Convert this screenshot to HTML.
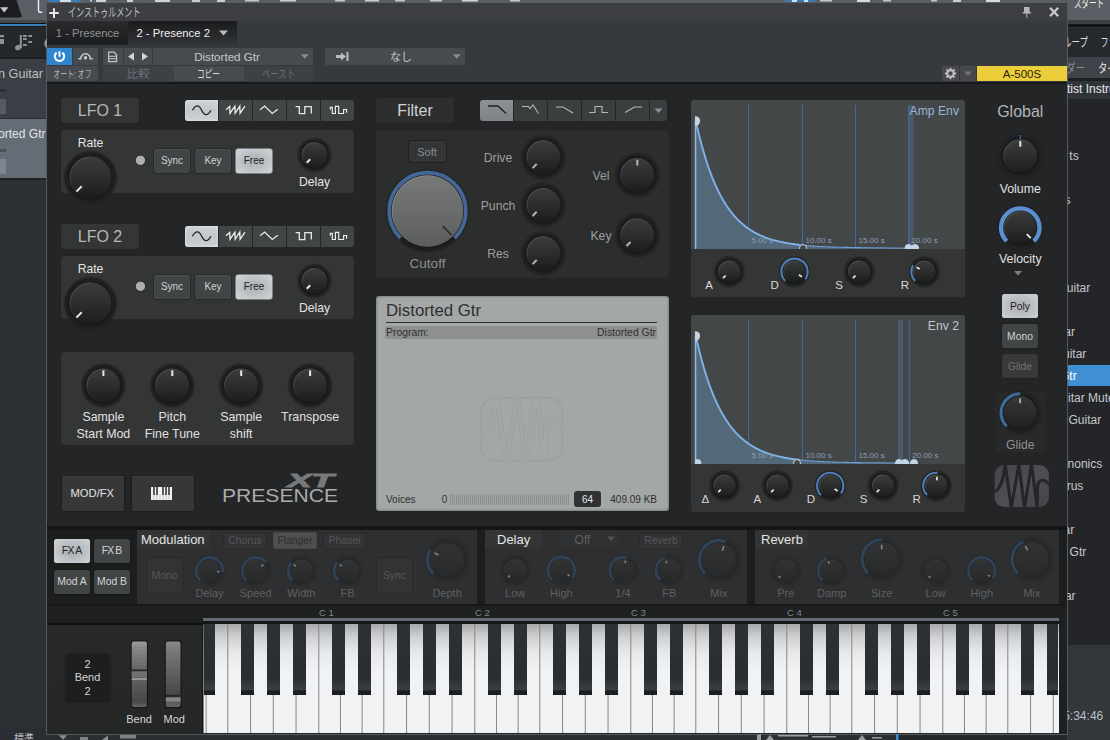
<!DOCTYPE html>
<html lang="ja"><head><meta charset="utf-8"><title>Presence XT</title>
<style>
html,body{margin:0;padding:0;background:#2f3237;}
body{width:1110px;height:740px;position:relative;overflow:hidden;font-family:"Liberation Sans","Noto Sans CJK JP",sans-serif;}
#root div{position:absolute;box-sizing:border-box;}
svg{position:absolute;left:0;top:0;}
svg text{font-family:"Liberation Sans","Noto Sans CJK JP",sans-serif;white-space:pre;}
</style></head><body>
<div id="root">
<div class="" style="left:0px;top:0px;width:1110px;height:740px;background:#2f3237;"></div>
<div class="" style="left:0px;top:0px;width:1110px;height:20px;background:#5a5f66;"></div>
<div class="" style="left:0px;top:20px;width:47px;height:3px;background:#45494e;"></div>
<div class="" style="left:0px;top:23px;width:47px;height:1.3px;background:#111214;"></div>
<div class="" style="left:0px;top:24.3px;width:47px;height:2px;background:#3a7fb8;"></div>
<div class="" style="left:0px;top:26.3px;width:47px;height:1px;background:#16181a;"></div>
<div class="" style="left:0px;top:27px;width:47px;height:30px;background:#24282b;"></div>
<div class="" style="left:0px;top:57px;width:47px;height:2px;background:#1c1e21;"></div>
<div class="" style="left:0px;top:59px;width:47px;height:59px;background:#3a3f45;"></div>
<div class="" style="left:0px;top:118px;width:47px;height:1px;background:#2c3035;"></div>
<div class="" style="left:0px;top:119px;width:47px;height:59px;background:#646c75;"></div>
<div class="" style="left:0px;top:178px;width:47px;height:1.5px;background:#1f2124;"></div>
<div class="" style="left:0px;top:179.5px;width:47px;height:555px;background:#2d3035;"></div>
<div class="" style="left:0px;top:734px;width:1110px;height:6px;background:#2b2e33;"></div>
<div class="" style="left:0px;top:728px;width:47px;height:12px;background:#2a2d31;"></div>
<div class="" style="left:899px;top:734.5px;width:168px;height:6px;background:#24272b;"></div>
<div class="" style="left:0px;top:89px;width:6px;height:3px;background:#2d3136;"></div>
<div class="" style="left:0px;top:99px;width:6px;height:15px;background:#555b61;"></div>
<div class="" style="left:0px;top:149px;width:6px;height:3px;background:#4a5057;"></div>
<div class="" style="left:0px;top:159px;width:6px;height:15px;background:#7d858e;"></div>
<div class="" style="left:1067px;top:20px;width:43px;height:3.8px;background:#3a3d42;"></div>
<div class="" style="left:1067px;top:23.8px;width:43px;height:3.7px;background:#131416;"></div>
<div class="" style="left:1067px;top:27.5px;width:43px;height:29.7px;background:#25282c;"></div>
<div class="" style="left:1067px;top:57.2px;width:43px;height:20.8px;background:#3f434a;"></div>
<div class="" style="left:1067px;top:78px;width:43px;height:3px;background:#1d1f22;"></div>
<div class="" style="left:1067px;top:81px;width:43px;height:18px;background:#30343a;"></div>
<div class="" style="left:1067px;top:99px;width:43px;height:546px;background:#232528;"></div>
<div class="" style="left:1067px;top:365px;width:43px;height:21px;background:#3f90d2;"></div>
<div class="" style="left:1067px;top:645px;width:43px;height:95px;background:#33363b;"></div>
<div class="" style="left:46px;top:3px;width:1021.5px;height:731.5px;background:#232527;box-shadow:inset 0 0 0 1px #555a60;"></div>
<div class="" style="left:47px;top:3px;width:1020px;height:18px;background:#3d3e41;"></div>
<div class="" style="left:47px;top:21px;width:1020px;height:61px;background:#36393d;"></div>
<div class="" style="left:47px;top:82px;width:1020px;height:2px;background:#17181a;"></div>
<div class="" style="left:47px;top:21px;width:81px;height:24px;background:linear-gradient(#2a2b2d,#1b1c1d);"></div>
<div class="" style="left:128px;top:21px;width:109px;height:26px;background:linear-gradient(#1a1b1c,#2c2e31 70%,#36393d);"></div>
<div class="" style="left:47px;top:48px;width:25px;height:17px;background:#2e86cf;"></div>
<div class="" style="left:73px;top:48px;width:25px;height:17px;background:#474b50;"></div>
<div class="" style="left:103px;top:48px;width:20px;height:17px;background:#474b50;"></div>
<div class="" style="left:124px;top:48px;width:28px;height:17px;background:#474b50;"></div>
<div class="" style="left:153px;top:48px;width:160px;height:17px;background:#474b50;"></div>
<div class="" style="left:325px;top:48px;width:140px;height:17px;background:#474b50;"></div>
<div class="" style="left:47px;top:66px;width:51px;height:15px;background:#474b50;"></div>
<div class="" style="left:103px;top:66px;width:71px;height:15px;background:#3d4145;"></div>
<div class="" style="left:174px;top:66px;width:70px;height:15px;background:#474b50;"></div>
<div class="" style="left:244px;top:66px;width:69px;height:15px;background:#3d4145;"></div>
<div class="" style="left:942px;top:66px;width:17px;height:15px;background:#47494d;"></div>
<div class="" style="left:960px;top:66px;width:16px;height:15px;background:#47494d;"></div>
<div class="" style="left:977px;top:66px;width:90px;height:15px;background:#ecce3a;"></div>
<div class="" style="left:61px;top:98px;width:78px;height:25px;background:#343535;border-radius:3px;"></div>
<div class="" style="left:185px;top:100px;width:33px;height:21px;background:linear-gradient(#cfd3d6,#c3c7ca 50%,#cdd0d3);border-radius:3px 0 0 3px;box-shadow:inset 0 0 3px rgba(255,255,255,.6);"></div>
<div class="" style="left:219px;top:100px;width:33px;height:21px;background:#414546;border-radius:0;"></div>
<div class="" style="left:253px;top:100px;width:33px;height:21px;background:#414546;border-radius:0;"></div>
<div class="" style="left:287px;top:100px;width:33px;height:21px;background:#414546;border-radius:0;"></div>
<div class="" style="left:321px;top:100px;width:33px;height:21px;background:#414546;border-radius:0 3px 3px 0;"></div>
<div class="" style="left:61px;top:130px;width:293px;height:63px;background:#343535;border-radius:4px;"></div>
<div class="" style="left:154px;top:149px;width:36px;height:24px;background:#414546;border-radius:2px;box-shadow:0 0 0 1px #27282a, inset 0 1px 0 rgba(255,255,255,0.06);"></div>
<div class="" style="left:195px;top:149px;width:36px;height:24px;background:#414546;border-radius:2px;box-shadow:0 0 0 1px #27282a, inset 0 1px 0 rgba(255,255,255,0.06);"></div>
<div class="" style="left:236px;top:149px;width:36px;height:24px;background:radial-gradient(ellipse at center,#b4b8bd 25%,#d2d5d8 100%);border-radius:2px;box-shadow:0 0 0 0.5px #c8cacc;"></div>
<div class="" style="left:61px;top:224px;width:78px;height:25px;background:#343535;border-radius:3px;"></div>
<div class="" style="left:185px;top:226px;width:33px;height:21px;background:linear-gradient(#cfd3d6,#c3c7ca 50%,#cdd0d3);border-radius:3px 0 0 3px;box-shadow:inset 0 0 3px rgba(255,255,255,.6);"></div>
<div class="" style="left:219px;top:226px;width:33px;height:21px;background:#414546;border-radius:0;"></div>
<div class="" style="left:253px;top:226px;width:33px;height:21px;background:#414546;border-radius:0;"></div>
<div class="" style="left:287px;top:226px;width:33px;height:21px;background:#414546;border-radius:0;"></div>
<div class="" style="left:321px;top:226px;width:33px;height:21px;background:#414546;border-radius:0 3px 3px 0;"></div>
<div class="" style="left:61px;top:256px;width:293px;height:63px;background:#343535;border-radius:4px;"></div>
<div class="" style="left:154px;top:275px;width:36px;height:24px;background:#414546;border-radius:2px;box-shadow:0 0 0 1px #27282a, inset 0 1px 0 rgba(255,255,255,0.06);"></div>
<div class="" style="left:195px;top:275px;width:36px;height:24px;background:#414546;border-radius:2px;box-shadow:0 0 0 1px #27282a, inset 0 1px 0 rgba(255,255,255,0.06);"></div>
<div class="" style="left:236px;top:275px;width:36px;height:24px;background:radial-gradient(ellipse at center,#b4b8bd 25%,#d2d5d8 100%);border-radius:2px;box-shadow:0 0 0 0.5px #c8cacc;"></div>
<div class="" style="left:61px;top:352px;width:293px;height:93px;background:#343535;border-radius:4px;"></div>
<div class="" style="left:61px;top:475px;width:63.5px;height:36.5px;background:#363738;border-radius:2.5px;box-shadow:inset 0 0 0 1px #1c1d1e, inset 0 2px 0 rgba(255,255,255,0.05);"></div>
<div class="" style="left:131px;top:475px;width:63.5px;height:36.5px;background:#363738;border-radius:2.5px;box-shadow:inset 0 0 0 1px #1c1d1e, inset 0 2px 0 rgba(255,255,255,0.05);"></div>
<div class="" style="left:376px;top:98px;width:78px;height:25px;background:#2d2e2e;border-radius:3px;"></div>
<div class="" style="left:480px;top:100px;width:33px;height:21px;background:linear-gradient(#8d9196,#7e8287);border-radius:3px 0 0 3px;"></div>
<div class="" style="left:514px;top:100px;width:33px;height:21px;background:#3b3e3f;"></div>
<div class="" style="left:548px;top:100px;width:33px;height:21px;background:#3b3e3f;"></div>
<div class="" style="left:582px;top:100px;width:33px;height:21px;background:#3b3e3f;"></div>
<div class="" style="left:616px;top:100px;width:33px;height:21px;background:#3b3e3f;"></div>
<div class="" style="left:650px;top:100px;width:17px;height:21px;background:#3b3e3f;border-radius:0 3px 3px 0;"></div>
<div class="" style="left:376px;top:130px;width:293px;height:148px;background:#2c2d2d;border-radius:4px;"></div>
<div class="" style="left:408.5px;top:141px;width:37.5px;height:21px;background:#333536;border-radius:2.5px;box-shadow:0 0 0 1px #1f2021;"></div>
<div class="" style="left:376px;top:296px;width:293px;height:215px;background:#a3a7a6;border-radius:3px;box-shadow:inset 0 0 3px rgba(0,0,0,.45);"></div>
<div class="" style="left:386px;top:322px;width:271px;height:1px;background:#2e3031;"></div>
<div class="" style="left:385px;top:326px;width:272px;height:13px;background:#8e908f;border-radius:2px;"></div>
<div class="" style="left:574px;top:491px;width:27px;height:16px;background:#303233;border-radius:3px;"></div>
<div class="" style="left:691px;top:100px;width:274px;height:197px;background:#343535;border-radius:3px;"></div>
<div class="" style="left:691px;top:100px;width:274px;height:149px;background:#434748;border-radius:3px 3px 0 0;"></div>
<div class="" style="left:691px;top:315px;width:274px;height:197px;background:#343535;border-radius:3px;"></div>
<div class="" style="left:691px;top:315px;width:274px;height:149px;background:#434748;border-radius:3px 3px 0 0;"></div>
<div class="" style="left:1002px;top:294px;width:36px;height:24px;background:radial-gradient(ellipse at center,#b2b6bc 25%,#cfd2d6 100%);border-radius:2.5px;"></div>
<div class="" style="left:1002px;top:324px;width:36px;height:24px;background:#414546;border-radius:2.5px;box-shadow:0 0 0 0.5px #1c1d1e;"></div>
<div class="" style="left:1002px;top:354px;width:36px;height:24px;background:#37393a;border-radius:2.5px;box-shadow:0 0 0 0.5px #1c1d1e;"></div>
<div class="" style="left:996px;top:392px;width:49px;height:60px;background:#27292b;"></div>
<div class="" style="left:47px;top:526.3px;width:1020px;height:3.4px;background:#151617;"></div>
<div class="" style="left:47px;top:529.5px;width:1020px;height:74.5px;background:#1c1d1d;"></div>
<div class="" style="left:47px;top:604px;width:1020px;height:2.2px;background:#171818;"></div>
<div class="" style="left:47px;top:606px;width:1020px;height:18px;background:#1f2020;"></div>
<div class="" style="left:54px;top:539px;width:36px;height:23.5px;background:radial-gradient(ellipse at center,#b2b6bc 25%,#d2d5d8 100%);border-radius:2.5px;"></div>
<div class="" style="left:94px;top:539px;width:36px;height:23.5px;background:#414546;border-radius:2.5px;box-shadow:0 0 0 0.5px #151617;"></div>
<div class="" style="left:54px;top:570px;width:36px;height:23.5px;background:#414546;border-radius:2.5px;box-shadow:0 0 0 0.5px #151617;"></div>
<div class="" style="left:94px;top:570px;width:36px;height:23.5px;background:#414546;border-radius:2.5px;box-shadow:0 0 0 0.5px #151617;"></div>
<div class="" style="left:137px;top:530px;width:340px;height:74px;background:#2e2f30;"></div>
<div class="" style="left:137px;top:530px;width:73px;height:18px;background:#333435;"></div>
<div class="" style="left:223px;top:532px;width:44px;height:17px;background:#323334;border-radius:2px;box-shadow:inset 0 0 0 1px #292a2b;"></div>
<div class="" style="left:273px;top:532px;width:44px;height:17px;background:#4e4f50;border-radius:2px;box-shadow:inset 0 0 0 1px #444546;"></div>
<div class="" style="left:323px;top:532px;width:44px;height:17px;background:#323334;border-radius:2px;box-shadow:inset 0 0 0 1px #292a2b;"></div>
<div class="" style="left:146px;top:557px;width:37px;height:37px;background:#323334;border-radius:2px;box-shadow:inset 0 0 0 1px #292a2b;"></div>
<div class="" style="left:376px;top:557px;width:37px;height:37px;background:#323334;border-radius:2px;box-shadow:inset 0 0 0 1px #292a2b;"></div>
<div class="" style="left:485px;top:530px;width:262px;height:74px;background:#2e2f30;"></div>
<div class="" style="left:485px;top:530px;width:57px;height:18px;background:#333435;"></div>
<div class="" style="left:560px;top:531px;width:60px;height:17px;background:#303132;"></div>
<div class="" style="left:639px;top:533px;width:44px;height:16px;background:#323334;border-radius:2px;box-shadow:inset 0 0 0 1px #292a2b;"></div>
<div class="" style="left:755px;top:530px;width:304px;height:74px;background:#2e2f30;"></div>
<div class="" style="left:755px;top:530px;width:52px;height:18px;background:#333435;"></div>
<div class="" style="left:203px;top:618px;width:856px;height:3.2px;background:#666b73;"></div>
<div class="" style="left:203px;top:621.2px;width:856px;height:3px;background:#141516;"></div>
<div class="" style="left:47px;top:624px;width:156px;height:110px;background:linear-gradient(#282929,#252626);"></div>
<div class="" style="left:203px;top:624px;width:856px;height:109px;background:#f1f2f3;"></div>
<div class="" style="left:47px;top:623px;width:156px;height:2px;background:#0e0f10;"></div>
<div class="" style="left:1059px;top:618px;width:8px;height:116px;background:#1f2022;"></div>
<div class="" style="left:64.5px;top:654px;width:45.5px;height:47.5px;background:#1d1e1f;border-radius:4px;box-shadow:0 0 2px #1d1e1f;"></div>
</div>
<svg width="1110" height="740" viewBox="0 0 1110 740">
<defs>
<radialGradient id="halo"><stop offset="0.85" stop-color="#000" stop-opacity="0.35"/><stop offset="1" stop-color="#000" stop-opacity="0"/></radialGradient>
<linearGradient id="kd" x1="0" y1="0" x2="0" y2="1"><stop offset="0" stop-color="#3b3c3c"/><stop offset="0.5" stop-color="#2c2d2d"/><stop offset="1" stop-color="#1b1c1c"/></linearGradient>
<linearGradient id="kdrim" x1="0" y1="0" x2="1" y2="1"><stop offset="0" stop-color="#6a6b6c"/><stop offset="0.5" stop-color="#333" stop-opacity="0.3"/><stop offset="1" stop-color="#111" stop-opacity="0.2"/></linearGradient>
<linearGradient id="kl" x1="0" y1="0" x2="0" y2="1"><stop offset="0" stop-color="#777878"/><stop offset="0.5" stop-color="#6b6c6c"/><stop offset="1" stop-color="#5c5d5d"/></linearGradient>
<linearGradient id="klrim" x1="0" y1="0" x2="1" y2="1"><stop offset="0" stop-color="#a5a6a6"/><stop offset="0.5" stop-color="#777" stop-opacity="0.3"/><stop offset="1" stop-color="#444" stop-opacity="0.4"/></linearGradient>
<linearGradient id="btnA" x1="0" y1="0" x2="0" y2="1"><stop offset="0" stop-color="#d6d9db"/><stop offset="0.5" stop-color="#c2c6c9"/><stop offset="1" stop-color="#d0d3d5"/></linearGradient>
<linearGradient id="wk" x1="0" y1="0" x2="0" y2="1"><stop offset="0" stop-color="#a6a8aa"/><stop offset="0.25" stop-color="#cdced0"/><stop offset="0.6" stop-color="#e8e9ea"/><stop offset="1" stop-color="#f1f2f3"/></linearGradient>
<linearGradient id="bk" x1="0" y1="0" x2="0" y2="1"><stop offset="0" stop-color="#2d3135"/><stop offset="0.75" stop-color="#2a2e32"/><stop offset="0.93" stop-color="#3a3f44"/><stop offset="0.94" stop-color="#1c1e21"/><stop offset="1" stop-color="#1c1e21"/></linearGradient>
<linearGradient id="wheel" x1="0" y1="0" x2="0" y2="1"><stop offset="0" stop-color="#8a8a8a"/><stop offset="0.5" stop-color="#5a5a5a"/><stop offset="1" stop-color="#6e6e6e"/></linearGradient>
<clipPath id="rclip"><rect x="1067.5" y="0" width="43" height="740"/></clipPath><clipPath id="lgclip2"><rect x="994.4" y="464.8" width="54.8" height="42.5" rx="9.8"/></clipPath><clipPath id="clip100"><rect x="695" y="100" width="270" height="149"/></clipPath><clipPath id="clip315"><rect x="695" y="315" width="270" height="149"/></clipPath><clipPath id="lgclip"><rect x="994.7" y="465.1" width="54.2" height="41.9" rx="9.5"/></clipPath><linearGradient id="lgfill" x1="0" y1="0" x2="1" y2="1"><stop offset="0" stop-color="#434548"/><stop offset="0.5" stop-color="#4c4e51"/><stop offset="1" stop-color="#434548"/></linearGradient><linearGradient id="wheelB" x1="0" y1="0" x2="0" y2="1"><stop offset="0" stop-color="#a0a0a0"/><stop offset="0.12" stop-color="#8a8a8a"/><stop offset="0.40" stop-color="#6c6c6c"/><stop offset="0.70" stop-color="#5a5a5a"/><stop offset="0.92" stop-color="#4a4a4a"/><stop offset="1" stop-color="#6a6a6a"/></linearGradient><linearGradient id="wheelM" x1="0" y1="0" x2="0" y2="1"><stop offset="0" stop-color="#8e8e8e"/><stop offset="0.15" stop-color="#7c7c7c"/><stop offset="0.55" stop-color="#5e5e5e"/><stop offset="0.80" stop-color="#4a4a4a"/><stop offset="1" stop-color="#6a6a6a"/></linearGradient></defs>
<text x="-2" y="73.4" font-size="13" fill="#bcbfc2" text-anchor="start" dominant-baseline="central" font-weight="normal" textLength="45" lengthAdjust="spacingAndGlyphs">n Guitar</text>
<text x="-2" y="133" font-size="13" fill="#e2e4e6" text-anchor="start" dominant-baseline="central" font-weight="normal" textLength="47.500" lengthAdjust="spacingAndGlyphs">orted Gtr</text>
<path d="M0,0H16.500L21.500,15.500Q22,17.500 20,17.500H0Z" fill="#1b1d20"/>
<path d="M0,7.200H8.500L4.200,12.600Z" fill="#c8c8c8"/>
<path d="M38.500,0V10.500Q38.500,12.300 40.300,12.300H42.200" fill="none" stroke="#f0f0f0" stroke-width="1.400"/>
<g fill="#8e9194"><rect x="0" y="35" width="4" height="2.200"/><rect x="0" y="39" width="4" height="5"/><rect x="19.800" y="35" width="2" height="13"/><ellipse cx="18.300" cy="47.500" rx="3.300" ry="2.600" transform="rotate(-20 18.300 47.500)"/><rect x="23" y="35" width="3.800" height="2"/><rect x="28.300" y="35" width="3.800" height="2"/><rect x="23" y="38" width="3.800" height="2"/><rect x="28.300" y="41" width="3.800" height="2"/><rect x="23" y="44" width="3.800" height="2"/><rect x="23" y="41" width="3.800" height="2" opacity="0"/></g>
<path d="M47,38.500 a6,6 0 0 0 0,10" fill="#8e9194"/>
<text x="24" y="738.5" font-size="10" fill="#c0c4c8" text-anchor="middle" dominant-baseline="central" font-weight="normal" >標準</text>
<g clip-path="url(#rclip)">
<text x="1074" y="3.7" font-size="12" fill="#f0f0f0" text-anchor="start" dominant-baseline="central" font-weight="normal" textLength="30" lengthAdjust="spacingAndGlyphs">スタート</text>
<text x="1063" y="43" font-size="12" fill="#dcdee0" text-anchor="start" dominant-baseline="central" font-weight="normal" textLength="25" lengthAdjust="spacingAndGlyphs">ループ</text>
<text x="1100.5" y="43" font-size="12" fill="#dcdee0" text-anchor="start" dominant-baseline="central" font-weight="normal" textLength="16" lengthAdjust="spacingAndGlyphs">ファ</text>
<text x="1066" y="68.6" font-size="12" fill="#8a8e94" text-anchor="start" dominant-baseline="central" font-weight="normal" textLength="19" lengthAdjust="spacingAndGlyphs">ダー</text>
<text x="1098.3" y="68.6" font-size="12" fill="#e4e4e4" text-anchor="start" dominant-baseline="central" font-weight="normal" textLength="18" lengthAdjust="spacingAndGlyphs">タイ</text>
<text x="1067" y="89.2" font-size="12" fill="#e8eaec" text-anchor="start" dominant-baseline="central" font-weight="normal" >tist Instru</text>
<text x="1069.3" y="155.5" font-size="12" fill="#c5c8cc" text-anchor="start" dominant-baseline="central" font-weight="normal" >ts</text>
<text x="1064.5" y="199.5" font-size="12" fill="#c5c8cc" text-anchor="start" dominant-baseline="central" font-weight="normal" >s</text>
<text x="1066.8" y="287.5" font-size="12" fill="#c5c8cc" text-anchor="start" dominant-baseline="central" font-weight="normal" >uitar</text>
<text x="1064.3" y="331.5" font-size="12" fill="#c5c8cc" text-anchor="start" dominant-baseline="central" font-weight="normal" >ar</text>
<text x="1063" y="353.5" font-size="12" fill="#c5c8cc" text-anchor="start" dominant-baseline="central" font-weight="normal" >uitar</text>
<text x="1060" y="375.5" font-size="12" fill="#ffffff" text-anchor="start" dominant-baseline="central" font-weight="normal" >Gtr</text>
<text x="1068" y="397.5" font-size="12" fill="#c5c8cc" text-anchor="start" dominant-baseline="central" font-weight="normal" >itar Mute</text>
<text x="1068.5" y="419.5" font-size="12" fill="#c5c8cc" text-anchor="start" dominant-baseline="central" font-weight="normal" >Guitar</text>
<text x="1067.6" y="463.5" font-size="12" fill="#c5c8cc" text-anchor="start" dominant-baseline="central" font-weight="normal" >nonics</text>
<text x="1066.7" y="485.5" font-size="12" fill="#c5c8cc" text-anchor="start" dominant-baseline="central" font-weight="normal" >rus</text>
<text x="1063.5" y="529.5" font-size="12" fill="#c5c8cc" text-anchor="start" dominant-baseline="central" font-weight="normal" >ar</text>
<text x="1069.6" y="551.5" font-size="12" fill="#c5c8cc" text-anchor="start" dominant-baseline="central" font-weight="normal" >Gtr</text>
<text x="1064.9" y="595.5" font-size="12" fill="#c5c8cc" text-anchor="start" dominant-baseline="central" font-weight="normal" >ar</text>
<text x="1063.2" y="715.5" font-size="12" fill="#b8c0c8" text-anchor="start" dominant-baseline="central" font-weight="normal" >5:34:46</text>
</g>
<path d="M49.300,13.100H58.800M54,8.200V18.100" stroke="#e6e6e6" stroke-width="2"/>
<text x="68" y="13.4" font-size="12.5" fill="#bcc0c4" text-anchor="start" dominant-baseline="central" font-weight="normal" textLength="72.5" lengthAdjust="spacingAndGlyphs">インストゥルメント</text>
<path d="M1024,7h5.600v5h1.300v1.600h-3.600v4.100h-1v-4.100h-3.600V12h1.300z" fill="#b4b4b4"/>
<path d="M1050,7.700l8.200,8.600M1058.200,7.700l-8.200,8.600" stroke="#cacaca" stroke-width="2.300"/>
<text x="87.6" y="33" font-size="11.5" fill="#8d9196" text-anchor="middle" dominant-baseline="central" font-weight="normal" textLength="63.5" lengthAdjust="spacingAndGlyphs">1 - Presence</text>
<text x="173.2" y="33" font-size="11.5" fill="#f0f0f0" text-anchor="middle" dominant-baseline="central" font-weight="normal" textLength="73.5" lengthAdjust="spacingAndGlyphs">2 - Presence 2</text>
<path d="M219,30.5h9l-4.5,5z" fill="#b8bcc0"/>
<path d="M56.6,52.6a4.7,4.7 0 1 0 5.8,0" fill="none" stroke="#fff" stroke-width="2"/><path d="M59.5,51.2v5.6" stroke="#fff" stroke-width="2"/>
<path d="M78.3,58.8h2.4a4.8,5 0 0 1 9.6,0h2.4" fill="none" stroke="#c8cbce" stroke-width="1.5"/><circle cx="85.5" cy="57.7" r="1.7" fill="#c8cbce"/>
<path d="M108.6,52.2h5.4l2.6,2.6v6.8h-8z" fill="none" stroke="#c4c7ca" stroke-width="1.2"/><path d="M108.6,56.2h8M108.6,58.8h8" stroke="#c4c7ca" stroke-width="1.1"/>
<path d="M134,52.5v8l-6,-4z" fill="#d0d3d6"/><path d="M142,52.5v8l6,-4z" fill="#d0d3d6"/>
<text x="227" y="56" font-size="11.6" fill="#c4c8cc" text-anchor="middle" dominant-baseline="central" font-weight="normal" >Distorted Gtr</text>
<path d="M301,54.300h7.500l-3.750,4.400z" fill="#8d9196"/>
<path d="M336,55h5v-2.5l5,4l-5,4V58h-5z" fill="#b8bcc0"/><rect x="346.5" y="52" width="2" height="9" fill="#b8bcc0"/>
<text x="401" y="57" font-size="11" fill="#c4c8cc" text-anchor="middle" dominant-baseline="central" font-weight="normal" >なし</text>
<path d="M453,54.300h7.500l-3.750,4.400z" fill="#8d9196"/>
<text x="72.5" y="73.5" font-size="10.5" fill="#b0b4b8" text-anchor="middle" dominant-baseline="central" font-weight="normal" textLength="38" lengthAdjust="spacingAndGlyphs">オート: オフ</text>
<text x="138" y="73.5" font-size="11.5" fill="#6a7078" text-anchor="middle" dominant-baseline="central" font-weight="normal" >比較</text>
<text x="208.5" y="73.5" font-size="11.5" fill="#d8dadc" text-anchor="middle" dominant-baseline="central" font-weight="normal" textLength="23" lengthAdjust="spacingAndGlyphs">コピー</text>
<text x="278.5" y="73.5" font-size="11.5" fill="#6a6e73" text-anchor="middle" dominant-baseline="central" font-weight="normal" textLength="33" lengthAdjust="spacingAndGlyphs">ペースト</text>
<text x="1022" y="73.5" font-size="11.5" fill="#2a2010" text-anchor="middle" dominant-baseline="central" font-weight="normal" >A-500S</text>
<g transform="translate(950.5,73.5)"><circle r="3.200" fill="none" stroke="#c0c0c0" stroke-width="2"/><rect x="-1" y="-5.600" width="2" height="2.400" fill="#c0c0c0" transform="rotate(0)"/><rect x="-1" y="-5.600" width="2" height="2.400" fill="#c0c0c0" transform="rotate(45)"/><rect x="-1" y="-5.600" width="2" height="2.400" fill="#c0c0c0" transform="rotate(90)"/><rect x="-1" y="-5.600" width="2" height="2.400" fill="#c0c0c0" transform="rotate(135)"/><rect x="-1" y="-5.600" width="2" height="2.400" fill="#c0c0c0" transform="rotate(180)"/><rect x="-1" y="-5.600" width="2" height="2.400" fill="#c0c0c0" transform="rotate(225)"/><rect x="-1" y="-5.600" width="2" height="2.400" fill="#c0c0c0" transform="rotate(270)"/><rect x="-1" y="-5.600" width="2" height="2.400" fill="#c0c0c0" transform="rotate(315)"/></g>
<path d="M964,71.500h8l-4,4.500z" fill="#6f7378"/>
<text x="100" y="110.5" font-size="16" fill="#b6b8ba" text-anchor="middle" dominant-baseline="central" font-weight="normal" letter-spacing:0.5px>LFO 1</text>
<path d="M192.500,110.2 c3,-5.800 6.500,-5.800 9.200,0 s6.200,5.800 9.200,0" fill="none" stroke="#222" stroke-width="1.3"/>
<path d="M226,109.8 L229.700,106.4 L230,113.2 L234.900,106.1 L235.200,113.2 L239.800,106.1 L240.100,113.2 L245,106.1" fill="none" stroke="#ececec" stroke-width="1.3" stroke-linejoin="miter"/>
<path d="M260.100,109.8 L264.600,106.1 L272.300,113.5 L277.800,109.2" fill="none" stroke="#ececec" stroke-width="1.25"/>
<path d="M295.600,106.7 h3.700 v6.900 h5.500 v-6.900 h6.500 v6.900" fill="none" stroke="#e8e8e8" stroke-width="1.3"/>
<path d="M330.300,109.8 V107.3 H332.300 V113.5 H335.400 V106.4 H338.700 V113.5 H343.600 V109.5 H346.600 V112.8" fill="none" stroke="#f0f0f0" stroke-width="1.15"/>
<text x="90.5" y="143.4" font-size="12.2" fill="#e4e4e4" text-anchor="middle" dominant-baseline="central" font-weight="normal" >Rate</text>
<g opacity="1.0"><circle cx="90.5" cy="177.5" r="28" fill="url(#halo)"/><circle cx="90.5" cy="177.5" r="26" fill="#1d1e1f"/><circle cx="90.5" cy="177.5" r="25.5" fill="none" stroke="#262728" stroke-width="1"/><circle cx="90.5" cy="177.5" r="21.8" fill="#141515"/><circle cx="90.5" cy="177.5" r="21" fill="url(#kd)"/><circle cx="90.5" cy="177.5" r="20.5" fill="none" stroke="url(#kdrim)" stroke-width="1"/><line x1="81.74" y1="186.26" x2="76.39" y2="191.61" stroke="#e8e8e8" stroke-width="2.0" stroke-linecap="butt"/></g>
<circle cx="140.400" cy="160.3" r="5" fill="#adaeaf"/><circle cx="140.400" cy="160.3" r="5.200" fill="none" stroke="#2a2b2c" stroke-width="1"/>
<text x="172" y="160.5" font-size="10" fill="#cfd1d3" text-anchor="middle" dominant-baseline="central" font-weight="normal" >Sync</text>
<text x="213" y="160.5" font-size="10" fill="#cfd1d3" text-anchor="middle" dominant-baseline="central" font-weight="normal" >Key</text>
<text x="254" y="160.5" font-size="10" fill="#1e1e1e" text-anchor="middle" dominant-baseline="central" font-weight="normal" >Free</text>
<g opacity="1.0"><circle cx="314.5" cy="155" r="18.2" fill="url(#halo)"/><circle cx="314.5" cy="155" r="16.2" fill="#1d1e1f"/><circle cx="314.5" cy="155" r="15.7" fill="none" stroke="#262728" stroke-width="1"/><circle cx="314.5" cy="155" r="13.8" fill="#141515"/><circle cx="314.5" cy="155" r="13" fill="url(#kd)"/><circle cx="314.5" cy="155" r="12.5" fill="none" stroke="url(#kdrim)" stroke-width="1"/><line x1="310.18" y1="159.32" x2="306.78" y2="162.72" stroke="#e8e8e8" stroke-width="2.0" stroke-linecap="butt"/></g>
<text x="314.5" y="182.4" font-size="12.2" fill="#e4e4e4" text-anchor="middle" dominant-baseline="central" font-weight="normal" >Delay</text>
<text x="100" y="236.5" font-size="16" fill="#b6b8ba" text-anchor="middle" dominant-baseline="central" font-weight="normal" letter-spacing:0.5px>LFO 2</text>
<path d="M192.500,236.2 c3,-5.800 6.500,-5.800 9.200,0 s6.200,5.800 9.200,0" fill="none" stroke="#222" stroke-width="1.3"/>
<path d="M226,235.8 L229.700,232.4 L230,239.2 L234.900,232.1 L235.200,239.2 L239.800,232.1 L240.100,239.2 L245,232.1" fill="none" stroke="#ececec" stroke-width="1.3" stroke-linejoin="miter"/>
<path d="M260.100,235.8 L264.600,232.1 L272.300,239.5 L277.800,235.2" fill="none" stroke="#ececec" stroke-width="1.25"/>
<path d="M295.600,232.7 h3.700 v6.900 h5.500 v-6.900 h6.500 v6.900" fill="none" stroke="#e8e8e8" stroke-width="1.3"/>
<path d="M330.300,235.8 V233.3 H332.300 V239.5 H335.400 V232.4 H338.700 V239.5 H343.600 V235.5 H346.600 V238.8" fill="none" stroke="#f0f0f0" stroke-width="1.15"/>
<text x="90.5" y="269.4" font-size="12.2" fill="#e4e4e4" text-anchor="middle" dominant-baseline="central" font-weight="normal" >Rate</text>
<g opacity="1.0"><circle cx="90.5" cy="303.5" r="28" fill="url(#halo)"/><circle cx="90.5" cy="303.5" r="26" fill="#1d1e1f"/><circle cx="90.5" cy="303.5" r="25.5" fill="none" stroke="#262728" stroke-width="1"/><circle cx="90.5" cy="303.5" r="21.8" fill="#141515"/><circle cx="90.5" cy="303.5" r="21" fill="url(#kd)"/><circle cx="90.5" cy="303.5" r="20.5" fill="none" stroke="url(#kdrim)" stroke-width="1"/><line x1="81.74" y1="312.26" x2="76.39" y2="317.61" stroke="#e8e8e8" stroke-width="2.0" stroke-linecap="butt"/></g>
<circle cx="140.400" cy="286.3" r="5" fill="#adaeaf"/><circle cx="140.400" cy="286.3" r="5.200" fill="none" stroke="#2a2b2c" stroke-width="1"/>
<text x="172" y="286.5" font-size="10" fill="#cfd1d3" text-anchor="middle" dominant-baseline="central" font-weight="normal" >Sync</text>
<text x="213" y="286.5" font-size="10" fill="#cfd1d3" text-anchor="middle" dominant-baseline="central" font-weight="normal" >Key</text>
<text x="254" y="286.5" font-size="10" fill="#1e1e1e" text-anchor="middle" dominant-baseline="central" font-weight="normal" >Free</text>
<g opacity="1.0"><circle cx="314.5" cy="281" r="18.2" fill="url(#halo)"/><circle cx="314.5" cy="281" r="16.2" fill="#1d1e1f"/><circle cx="314.5" cy="281" r="15.7" fill="none" stroke="#262728" stroke-width="1"/><circle cx="314.5" cy="281" r="13.8" fill="#141515"/><circle cx="314.5" cy="281" r="13" fill="url(#kd)"/><circle cx="314.5" cy="281" r="12.5" fill="none" stroke="url(#kdrim)" stroke-width="1"/><line x1="310.18" y1="285.32" x2="306.78" y2="288.72" stroke="#e8e8e8" stroke-width="2.0" stroke-linecap="butt"/></g>
<text x="314.5" y="308.4" font-size="12.2" fill="#e4e4e4" text-anchor="middle" dominant-baseline="central" font-weight="normal" >Delay</text>
<g opacity="1.0"><circle cx="103.4" cy="385.6" r="23.4" fill="url(#halo)"/><circle cx="103.4" cy="385.6" r="21.4" fill="#1d1e1f"/><circle cx="103.4" cy="385.6" r="20.9" fill="none" stroke="#262728" stroke-width="1"/><circle cx="103.4" cy="385.6" r="17.8" fill="#141515"/><circle cx="103.4" cy="385.6" r="17" fill="url(#kd)"/><circle cx="103.4" cy="385.6" r="16.5" fill="none" stroke="url(#kdrim)" stroke-width="1"/><line x1="103.40" y1="376.08" x2="103.40" y2="370.30" stroke="#e8e8e8" stroke-width="2.0" stroke-linecap="butt"/></g>
<text x="103.4" y="417.3" font-size="12.4" fill="#e0e0e0" text-anchor="middle" dominant-baseline="central" font-weight="normal" >Sample</text>
<text x="103.4" y="434.2" font-size="12.4" fill="#e0e0e0" text-anchor="middle" dominant-baseline="central" font-weight="normal" >Start Mod</text>
<g opacity="1.0"><circle cx="172.3" cy="385.6" r="23.4" fill="url(#halo)"/><circle cx="172.3" cy="385.6" r="21.4" fill="#1d1e1f"/><circle cx="172.3" cy="385.6" r="20.9" fill="none" stroke="#262728" stroke-width="1"/><circle cx="172.3" cy="385.6" r="17.8" fill="#141515"/><circle cx="172.3" cy="385.6" r="17" fill="url(#kd)"/><circle cx="172.3" cy="385.6" r="16.5" fill="none" stroke="url(#kdrim)" stroke-width="1"/><line x1="172.30" y1="376.08" x2="172.30" y2="370.30" stroke="#e8e8e8" stroke-width="2.0" stroke-linecap="butt"/></g>
<text x="172.3" y="417.3" font-size="12.4" fill="#e0e0e0" text-anchor="middle" dominant-baseline="central" font-weight="normal" >Pitch</text>
<text x="172.3" y="434.2" font-size="12.4" fill="#e0e0e0" text-anchor="middle" dominant-baseline="central" font-weight="normal" >Fine Tune</text>
<g opacity="1.0"><circle cx="241.2" cy="385.6" r="23.4" fill="url(#halo)"/><circle cx="241.2" cy="385.6" r="21.4" fill="#1d1e1f"/><circle cx="241.2" cy="385.6" r="20.9" fill="none" stroke="#262728" stroke-width="1"/><circle cx="241.2" cy="385.6" r="17.8" fill="#141515"/><circle cx="241.2" cy="385.6" r="17" fill="url(#kd)"/><circle cx="241.2" cy="385.6" r="16.5" fill="none" stroke="url(#kdrim)" stroke-width="1"/><line x1="241.20" y1="376.08" x2="241.20" y2="370.30" stroke="#e8e8e8" stroke-width="2.0" stroke-linecap="butt"/></g>
<text x="241.2" y="417.3" font-size="12.4" fill="#e0e0e0" text-anchor="middle" dominant-baseline="central" font-weight="normal" >Sample</text>
<text x="241.2" y="434.2" font-size="12.4" fill="#e0e0e0" text-anchor="middle" dominant-baseline="central" font-weight="normal" >shift</text>
<g opacity="1.0"><circle cx="310.1" cy="385.6" r="23.4" fill="url(#halo)"/><circle cx="310.1" cy="385.6" r="21.4" fill="#1d1e1f"/><circle cx="310.1" cy="385.6" r="20.9" fill="none" stroke="#262728" stroke-width="1"/><circle cx="310.1" cy="385.6" r="17.8" fill="#141515"/><circle cx="310.1" cy="385.6" r="17" fill="url(#kd)"/><circle cx="310.1" cy="385.6" r="16.5" fill="none" stroke="url(#kdrim)" stroke-width="1"/><line x1="310.10" y1="376.08" x2="310.10" y2="370.30" stroke="#e8e8e8" stroke-width="2.0" stroke-linecap="butt"/></g>
<text x="310.1" y="417.3" font-size="12.4" fill="#e0e0e0" text-anchor="middle" dominant-baseline="central" font-weight="normal" >Transpose</text>
<text x="92.3" y="492.8" font-size="11.2" fill="#e4e4e4" text-anchor="middle" dominant-baseline="central" font-weight="normal" >MOD/FX</text>
<rect x="151" y="487" width="21" height="13" fill="#f2f2f2"/><rect x="153.2" y="487" width="1.6" height="8" fill="#363738"/><rect x="156.2" y="487" width="1.6" height="8" fill="#363738"/><rect x="162.2" y="487" width="1.6" height="8" fill="#363738"/><rect x="165.2" y="487" width="1.6" height="8" fill="#363738"/><rect x="168.2" y="487" width="1.6" height="8" fill="#363738"/><rect x="153.75" y="495" width="0.5" height="5" fill="#999"/><rect x="156.75" y="495" width="0.5" height="5" fill="#999"/><rect x="159.75" y="495" width="0.5" height="5" fill="#999"/><rect x="162.75" y="495" width="0.5" height="5" fill="#999"/><rect x="165.75" y="495" width="0.5" height="5" fill="#999"/><rect x="168.75" y="495" width="0.5" height="5" fill="#999"/>
<text x="280" y="495.5" font-size="19" fill="#ababab" text-anchor="middle" dominant-baseline="central" font-weight="normal" textLength="116" lengthAdjust="spacingAndGlyphs">PRESENCE</text>
<text x="310.5" y="480.8" font-size="17.5" fill="#77787a" text-anchor="middle" dominant-baseline="central" font-weight="bold" font-style="italic" textLength="46" lengthAdjust="spacingAndGlyphs" stroke="#77787a" stroke-width="0.9">XT</text>
<text x="415" y="110.5" font-size="16" fill="#d0d2d4" text-anchor="middle" dominant-baseline="central" font-weight="normal" letter-spacing:0.4px>Filter</text>
<path d="M654.500,108.500h8l-4,4.500z" fill="#8d9196"/>
<path d="M488,106 h10 l8,7.500" fill="none" stroke="#1e1f20" stroke-width="1.4"/>
<path d="M522,106.500 h6.500 l1.500,2 l3,-3.500 l5.500,8.500" fill="none" stroke="#b8b8b8" stroke-width="1.1"/>
<path d="M556,107 h7 l10,6" fill="none" stroke="#b8b8b8" stroke-width="1.1"/>
<path d="M589,112.500 h6 v-6 h7 v6 h6" fill="none" stroke="#b8b8b8" stroke-width="1.1"/>
<path d="M625,112.500 l9.500,-5.500 h7.500" fill="none" stroke="#b8b8b8" stroke-width="1.1"/>
<text x="427" y="151.5" font-size="11" fill="#8b8d8f" text-anchor="middle" dominant-baseline="central" font-weight="normal" >Soft</text>
<g opacity="1.0"><circle cx="427.5" cy="211" r="43" fill="url(#halo)"/><circle cx="427.5" cy="211" r="41" fill="#1d1e1f"/><circle cx="427.5" cy="211" r="40.5" fill="none" stroke="#262728" stroke-width="1"/><circle cx="427.5" cy="211" r="36.599999999999994" fill="#141515"/><path d="M400.42,238.08A38.3,38.3 0 1 1 454.58,238.08" fill="none" stroke="#44679a" stroke-width="3.80"/><circle cx="427.5" cy="211" r="35.8" fill="url(#kl)"/><circle cx="427.5" cy="211" r="35.3" fill="none" stroke="url(#klrim)" stroke-width="1"/><line x1="442.69" y1="226.19" x2="451.55" y2="235.05" stroke="#2a2b2c" stroke-width="1.6"/></g>
<text x="427.5" y="263.7" font-size="13.5" fill="#8e8f90" text-anchor="middle" dominant-baseline="central" font-weight="normal" >Cutoff</text>
<g opacity="1.0"><circle cx="543.4" cy="157.3" r="23.4" fill="url(#halo)"/><circle cx="543.4" cy="157.3" r="21.4" fill="#1d1e1f"/><circle cx="543.4" cy="157.3" r="20.9" fill="none" stroke="#262728" stroke-width="1"/><circle cx="543.4" cy="157.3" r="17.8" fill="#141515"/><circle cx="543.4" cy="157.3" r="17" fill="url(#kd)"/><circle cx="543.4" cy="157.3" r="16.5" fill="none" stroke="url(#kdrim)" stroke-width="1"/><line x1="536.67" y1="164.03" x2="532.58" y2="168.12" stroke="#b4b4b4" stroke-width="2.0" stroke-linecap="butt"/></g>
<text x="498" y="157.9" font-size="12.2" fill="#9e9fa0" text-anchor="middle" dominant-baseline="central" font-weight="normal" >Drive</text>
<g opacity="1.0"><circle cx="543.4" cy="205.1" r="23.4" fill="url(#halo)"/><circle cx="543.4" cy="205.1" r="21.4" fill="#1d1e1f"/><circle cx="543.4" cy="205.1" r="20.9" fill="none" stroke="#262728" stroke-width="1"/><circle cx="543.4" cy="205.1" r="17.8" fill="#141515"/><circle cx="543.4" cy="205.1" r="17" fill="url(#kd)"/><circle cx="543.4" cy="205.1" r="16.5" fill="none" stroke="url(#kdrim)" stroke-width="1"/><line x1="536.67" y1="211.83" x2="532.58" y2="215.92" stroke="#b4b4b4" stroke-width="2.0" stroke-linecap="butt"/></g>
<text x="498" y="205.7" font-size="12.2" fill="#9e9fa0" text-anchor="middle" dominant-baseline="central" font-weight="normal" >Punch</text>
<g opacity="1.0"><circle cx="543.4" cy="253.3" r="23.4" fill="url(#halo)"/><circle cx="543.4" cy="253.3" r="21.4" fill="#1d1e1f"/><circle cx="543.4" cy="253.3" r="20.9" fill="none" stroke="#262728" stroke-width="1"/><circle cx="543.4" cy="253.3" r="17.8" fill="#141515"/><circle cx="543.4" cy="253.3" r="17" fill="url(#kd)"/><circle cx="543.4" cy="253.3" r="16.5" fill="none" stroke="url(#kdrim)" stroke-width="1"/><line x1="536.67" y1="260.03" x2="532.58" y2="264.12" stroke="#b4b4b4" stroke-width="2.0" stroke-linecap="butt"/></g>
<text x="498" y="253.9" font-size="12.2" fill="#9e9fa0" text-anchor="middle" dominant-baseline="central" font-weight="normal" >Res</text>
<g opacity="1.0"><circle cx="637.3" cy="175.1" r="23.4" fill="url(#halo)"/><circle cx="637.3" cy="175.1" r="21.4" fill="#1d1e1f"/><circle cx="637.3" cy="175.1" r="20.9" fill="none" stroke="#262728" stroke-width="1"/><circle cx="637.3" cy="175.1" r="17.8" fill="#141515"/><circle cx="637.3" cy="175.1" r="17" fill="url(#kd)"/><circle cx="637.3" cy="175.1" r="16.5" fill="none" stroke="url(#kdrim)" stroke-width="1"/><line x1="637.30" y1="165.58" x2="637.30" y2="159.80" stroke="#b4b4b4" stroke-width="2.0" stroke-linecap="butt"/></g>
<g opacity="1.0"><circle cx="637.3" cy="235.2" r="23.4" fill="url(#halo)"/><circle cx="637.3" cy="235.2" r="21.4" fill="#1d1e1f"/><circle cx="637.3" cy="235.2" r="20.9" fill="none" stroke="#262728" stroke-width="1"/><circle cx="637.3" cy="235.2" r="17.8" fill="#141515"/><circle cx="637.3" cy="235.2" r="17" fill="url(#kd)"/><circle cx="637.3" cy="235.2" r="16.5" fill="none" stroke="url(#kdrim)" stroke-width="1"/><line x1="630.57" y1="241.93" x2="626.48" y2="246.02" stroke="#b4b4b4" stroke-width="2.0" stroke-linecap="butt"/></g>
<text x="601" y="175.7" font-size="12.2" fill="#9e9fa0" text-anchor="middle" dominant-baseline="central" font-weight="normal" >Vel</text>
<text x="601" y="235.8" font-size="12.2" fill="#9e9fa0" text-anchor="middle" dominant-baseline="central" font-weight="normal" >Key</text>
<text x="386" y="310.7" font-size="16.8" fill="#2e3031" text-anchor="start" dominant-baseline="central" font-weight="normal" >Distorted Gtr</text>
<text x="386" y="332.5" font-size="10.4" fill="#2e3031" text-anchor="start" dominant-baseline="central" font-weight="normal" >Program:</text>
<text x="656" y="332.5" font-size="10.4" fill="#2e3031" text-anchor="end" dominant-baseline="central" font-weight="normal" >Distorted Gtr</text>
<text x="386" y="499.5" font-size="10" fill="#2e3031" text-anchor="start" dominant-baseline="central" font-weight="normal" >Voices</text>
<text x="444.5" y="499.5" font-size="10" fill="#2e3031" text-anchor="middle" dominant-baseline="central" font-weight="normal" >0</text>
<rect x="450" y="494" width="1" height="11" fill="#8b8e8d"/><rect x="452" y="494" width="1" height="11" fill="#8b8e8d"/><rect x="454" y="494" width="1" height="11" fill="#8b8e8d"/><rect x="456" y="494" width="1" height="11" fill="#8b8e8d"/><rect x="458" y="494" width="1" height="11" fill="#8b8e8d"/><rect x="460" y="494" width="1" height="11" fill="#8b8e8d"/><rect x="462" y="494" width="1" height="11" fill="#8b8e8d"/><rect x="464" y="494" width="1" height="11" fill="#8b8e8d"/><rect x="466" y="494" width="1" height="11" fill="#8b8e8d"/><rect x="468" y="494" width="1" height="11" fill="#8b8e8d"/><rect x="470" y="494" width="1" height="11" fill="#8b8e8d"/><rect x="472" y="494" width="1" height="11" fill="#8b8e8d"/><rect x="474" y="494" width="1" height="11" fill="#8b8e8d"/><rect x="476" y="494" width="1" height="11" fill="#8b8e8d"/><rect x="478" y="494" width="1" height="11" fill="#8b8e8d"/><rect x="480" y="494" width="1" height="11" fill="#8b8e8d"/><rect x="482" y="494" width="1" height="11" fill="#8b8e8d"/><rect x="484" y="494" width="1" height="11" fill="#8b8e8d"/><rect x="486" y="494" width="1" height="11" fill="#8b8e8d"/><rect x="488" y="494" width="1" height="11" fill="#8b8e8d"/><rect x="490" y="494" width="1" height="11" fill="#8b8e8d"/><rect x="492" y="494" width="1" height="11" fill="#8b8e8d"/><rect x="494" y="494" width="1" height="11" fill="#8b8e8d"/><rect x="496" y="494" width="1" height="11" fill="#8b8e8d"/><rect x="498" y="494" width="1" height="11" fill="#8b8e8d"/><rect x="500" y="494" width="1" height="11" fill="#8b8e8d"/><rect x="502" y="494" width="1" height="11" fill="#8b8e8d"/><rect x="504" y="494" width="1" height="11" fill="#8b8e8d"/><rect x="506" y="494" width="1" height="11" fill="#8b8e8d"/><rect x="508" y="494" width="1" height="11" fill="#8b8e8d"/><rect x="510" y="494" width="1" height="11" fill="#8b8e8d"/><rect x="512" y="494" width="1" height="11" fill="#8b8e8d"/><rect x="514" y="494" width="1" height="11" fill="#8b8e8d"/><rect x="516" y="494" width="1" height="11" fill="#8b8e8d"/><rect x="518" y="494" width="1" height="11" fill="#8b8e8d"/><rect x="520" y="494" width="1" height="11" fill="#8b8e8d"/><rect x="522" y="494" width="1" height="11" fill="#8b8e8d"/><rect x="524" y="494" width="1" height="11" fill="#8b8e8d"/><rect x="526" y="494" width="1" height="11" fill="#8b8e8d"/><rect x="528" y="494" width="1" height="11" fill="#8b8e8d"/><rect x="530" y="494" width="1" height="11" fill="#8b8e8d"/><rect x="532" y="494" width="1" height="11" fill="#8b8e8d"/><rect x="534" y="494" width="1" height="11" fill="#8b8e8d"/><rect x="536" y="494" width="1" height="11" fill="#8b8e8d"/><rect x="538" y="494" width="1" height="11" fill="#8b8e8d"/><rect x="540" y="494" width="1" height="11" fill="#8b8e8d"/><rect x="542" y="494" width="1" height="11" fill="#8b8e8d"/><rect x="544" y="494" width="1" height="11" fill="#8b8e8d"/><rect x="546" y="494" width="1" height="11" fill="#8b8e8d"/><rect x="548" y="494" width="1" height="11" fill="#8b8e8d"/><rect x="550" y="494" width="1" height="11" fill="#8b8e8d"/><rect x="552" y="494" width="1" height="11" fill="#8b8e8d"/><rect x="554" y="494" width="1" height="11" fill="#8b8e8d"/><rect x="556" y="494" width="1" height="11" fill="#8b8e8d"/><rect x="558" y="494" width="1" height="11" fill="#8b8e8d"/><rect x="560" y="494" width="1" height="11" fill="#8b8e8d"/><rect x="562" y="494" width="1" height="11" fill="#8b8e8d"/><rect x="564" y="494" width="1" height="11" fill="#8b8e8d"/><rect x="566" y="494" width="1" height="11" fill="#8b8e8d"/><rect x="568" y="494" width="1" height="11" fill="#8b8e8d"/>
<text x="587.5" y="499.5" font-size="10" fill="#e6e6e6" text-anchor="middle" dominant-baseline="central" font-weight="normal" >64</text>
<text x="657" y="499.5" font-size="10" fill="#2e3031" text-anchor="end" dominant-baseline="central" font-weight="normal" >409.09 KB</text>
<g transform="translate(481,397.6) scale(1.504,1.513) translate(-994.7,-465.1)" clip-path="url(#lgclip2)" fill="none"><rect x="994.7" y="465.1" width="54.2" height="41.9" rx="9.5" stroke="#9b9f9e" stroke-width="1.1"/><path d="M994.7,491.5 C1001,489 1003.5,478 1005.2,464 L1011.3,508 L1018.8,464 L1024.5,508 L1031.5,464 L1037.2,508 L1037.6,488 C1037.6,480 1043,477 1049.5,484.5" stroke="#9b9f9e" stroke-width="3.1" stroke-miterlimit="10"/><path d="M994.7,491.5 C1001,489 1003.5,478 1005.2,464 L1011.3,508 L1018.8,464 L1024.5,508 L1031.5,464 L1037.2,508 L1037.6,488 C1037.6,480 1043,477 1049.5,484.5" stroke="#a3a7a6" stroke-width="2.1" stroke-miterlimit="10"/></g>
<rect x="908" y="105" width="5.5" height="144" fill="#4a5a6c"/>
<rect x="748.0" y="105" width="1" height="144" fill="#3f6a9a"/>
<rect x="802.0" y="105" width="1" height="144" fill="#3f6a9a"/>
<rect x="855.0" y="105" width="1" height="144" fill="#3f6a9a"/>
<rect x="907.9" y="105" width="1" height="144" fill="#3f6a9a"/>
<path d="M695.8,121.0 L696.8,125.5 L697.8,129.8 L698.8,133.9 L699.8,137.9 L700.8,141.8 L701.8,145.5 L702.8,149.1 L703.8,152.6 L704.8,155.9 L705.8,159.1 L706.8,162.3 L707.8,165.3 L708.8,168.2 L709.8,171.0 L710.8,173.7 L711.8,176.3 L712.8,178.8 L713.8,181.2 L714.8,183.6 L715.8,185.8 L716.8,188.0 L717.8,190.1 L718.8,192.1 L719.8,194.1 L720.8,196.0 L721.8,197.8 L722.8,199.6 L723.8,201.3 L724.8,202.9 L725.8,204.5 L726.8,206.0 L727.8,207.5 L728.8,208.9 L729.8,210.3 L730.8,211.6 L731.8,212.9 L732.8,214.1 L733.8,215.3 L734.8,216.5 L735.8,217.6 L736.8,218.6 L737.8,219.7 L738.8,220.7 L739.8,221.6 L740.8,222.5 L741.8,223.4 L742.8,224.3 L743.8,225.1 L744.8,225.9 L745.8,226.7 L746.8,227.5 L747.8,228.2 L748.8,228.9 L749.8,229.5 L750.8,230.2 L751.8,230.8 L752.8,231.4 L753.8,232.0 L754.8,232.6 L755.8,233.1 L756.8,233.6 L757.8,234.1 L758.8,234.6 L759.8,235.1 L760.8,235.5 L761.8,236.0 L762.8,236.4 L763.8,236.8 L764.8,237.2 L765.8,237.6 L766.8,237.9 L767.8,238.3 L768.8,238.6 L769.8,239.0 L770.8,239.3 L771.8,239.6 L772.8,239.9 L773.8,240.2 L774.8,240.4 L775.8,240.7 L776.8,241.0 L777.8,241.2 L778.8,241.4 L779.8,241.7 L780.8,241.9 L781.8,242.1 L782.8,242.3 L783.8,242.5 L784.8,242.7 L785.8,242.9 L786.8,243.1 L787.8,243.2 L788.8,243.4 L789.8,243.6 L790.8,243.7 L791.8,243.9 L792.8,244.0 L793.8,244.2 L794.8,244.3 L795.8,244.4 L796.8,244.6 L797.8,244.7 L798.8,244.8 L799.8,244.9 L800.8,245.0 L801.8,245.1 L802.8,245.2 L803.8,245.3 L804.8,245.4 L805.8,245.5 L806.8,245.6 L807.8,245.7 L808.8,245.8 L809.8,245.8 L810.8,245.9 L811.8,246.0 L812.8,246.1 L813.8,246.1 L814.8,246.2 L815.8,246.3 L816.8,246.3 L817.8,246.4 L818.8,246.4 L819.8,246.5 L820.8,246.5 L821.8,246.6 L822.8,246.6 L823.8,246.7 L824.8,246.7 L825.8,246.8 L826.8,246.8 L827.8,246.9 L828.8,246.9 L829.8,246.9 L830.8,247.0 L831.8,247.0 L832.8,247.0 L833.8,247.1 L834.8,247.1 L835.8,247.1 L836.8,247.2 L837.8,247.2 L838.8,247.2 L839.8,247.3 L840.8,247.3 L841.8,247.3 L842.8,247.3 L843.8,247.4 L844.8,247.4 L845.8,247.4 L846.8,247.4 L847.8,247.4 L848.8,247.5 L849.8,247.5 L850.8,247.5 L851.8,247.5 L852.8,247.5 L853.8,247.6 L854.8,247.6 L855.8,247.6 L856.8,247.6 L857.8,247.6 L858.8,247.6 L859.8,247.6 L860.8,247.6 L861.8,247.7 L862.8,247.7 L863.8,247.7 L864.8,247.7 L865.8,247.7 L866.8,247.7 L867.8,247.7 L868.8,247.7 L869.8,247.7 L908.4,248 L908.4,249 L695.8,249Z" fill="#536878"/>
<path d="M798.8,244.8 L799.8,244.9 L800.8,245.0 L801.8,245.1 L802.8,245.2 L803.8,245.3 L804.8,245.4 L805.8,245.5 L806.8,245.6 L807.8,245.7 L808.8,245.8 L809.8,245.8 L810.8,245.9 L811.8,246.0 L812.8,246.1 L813.8,246.1 L814.8,246.2 L815.8,246.3 L816.8,246.3 L817.8,246.4 L818.8,246.4 L819.8,246.5 L820.8,246.5 L821.8,246.6 L822.8,246.6 L823.8,246.7 L824.8,246.7 L825.8,246.8 L826.8,246.8 L827.8,246.9 L828.8,246.9 L829.8,246.9 L830.8,247.0 L831.8,247.0 L832.8,247.0 L833.8,247.1 L834.8,247.1 L835.8,247.1 L836.8,247.2 L837.8,247.2 L838.8,247.2 L839.8,247.3 L840.8,247.3 L841.8,247.3 L842.8,247.3 L843.8,247.4 L844.8,247.4 L845.8,247.4 L846.8,247.4 L847.8,247.4 L848.8,247.5 L849.8,247.5 L850.8,247.5 L851.8,247.5 L852.8,247.5 L853.8,247.6 L854.8,247.6 L855.8,247.6 L856.8,247.6 L857.8,247.6 L858.8,247.6 L859.8,247.6 L860.8,247.6 L861.8,247.7 L862.8,247.7 L863.8,247.7 L864.8,247.7 L865.8,247.7 L866.8,247.7 L867.8,247.7 L868.8,247.7 L869.8,247.7 L912.4,248.2" fill="none" stroke="#6b9fd8" stroke-width="1.1"/>
<path d="M695.8,121.0 L696.8,125.5 L697.8,129.8 L698.8,133.9 L699.8,137.9 L700.8,141.8 L701.8,145.5 L702.8,149.1 L703.8,152.6 L704.8,155.9 L705.8,159.1 L706.8,162.3 L707.8,165.3 L708.8,168.2 L709.8,171.0 L710.8,173.7 L711.8,176.3 L712.8,178.8 L713.8,181.2 L714.8,183.6 L715.8,185.8 L716.8,188.0 L717.8,190.1 L718.8,192.1 L719.8,194.1 L720.8,196.0 L721.8,197.8 L722.8,199.6 L723.8,201.3 L724.8,202.9 L725.8,204.5 L726.8,206.0 L727.8,207.5 L728.8,208.9 L729.8,210.3 L730.8,211.6 L731.8,212.9 L732.8,214.1 L733.8,215.3 L734.8,216.5 L735.8,217.6 L736.8,218.6 L737.8,219.7 L738.8,220.7 L739.8,221.6 L740.8,222.5 L741.8,223.4 L742.8,224.3 L743.8,225.1 L744.8,225.9 L745.8,226.7 L746.8,227.5 L747.8,228.2 L748.8,228.9 L749.8,229.5 L750.8,230.2 L751.8,230.8 L752.8,231.4 L753.8,232.0 L754.8,232.6 L755.8,233.1 L756.8,233.6 L757.8,234.1 L758.8,234.6 L759.8,235.1 L760.8,235.5 L761.8,236.0 L762.8,236.4 L763.8,236.8 L764.8,237.2 L765.8,237.6 L766.8,237.9 L767.8,238.3 L768.8,238.6 L769.8,239.0 L770.8,239.3 L771.8,239.6 L772.8,239.9 L773.8,240.2 L774.8,240.4 L775.8,240.7 L776.8,241.0 L777.8,241.2 L778.8,241.4 L779.8,241.7 L780.8,241.9 L781.8,242.1 L782.8,242.3 L783.8,242.5 L784.8,242.7 L785.8,242.9 L786.8,243.1 L787.8,243.2 L788.8,243.4 L789.8,243.6 L790.8,243.7 L791.8,243.9 L792.8,244.0 L793.8,244.2 L794.8,244.3 L795.8,244.4 L796.8,244.6 L797.8,244.7 L798.8,244.8 L799.8,244.9" fill="none" stroke="#7fb2e8" stroke-width="1.9"/>
<rect x="694.8" y="121" width="1.5" height="128" fill="#8fbdea"/>
<g clip-path="url(#clip100)">
<circle cx="695.3" cy="121" r="4.8" fill="#c3d4e4"/>
<circle cx="803" cy="248" r="3.5" fill="#434748" stroke="#c3d4e4" stroke-width="1"/>
<circle cx="908.5" cy="248" r="3.5" fill="#c3d4e4" stroke="#c3d4e4" stroke-width="1"/>
<circle cx="915" cy="248" r="3.5" fill="#c3d4e4" stroke="#c3d4e4" stroke-width="1"/>
</g>
<text x="751.5" y="240" font-size="8" fill="#8c9fba" text-anchor="start" dominant-baseline="central" font-weight="normal" >5.00 s</text>
<text x="805.5" y="240" font-size="8" fill="#8c9fba" text-anchor="start" dominant-baseline="central" font-weight="normal" >10.00 s</text>
<text x="858.5" y="240" font-size="8" fill="#8c9fba" text-anchor="start" dominant-baseline="central" font-weight="normal" >15.00 s</text>
<text x="911.4" y="240" font-size="8" fill="#8c9fba" text-anchor="start" dominant-baseline="central" font-weight="normal" >20.00 s</text>
<text x="959" y="110.5" font-size="12.2" fill="#9ab6dc" text-anchor="end" dominant-baseline="central" font-weight="normal" >Amp Env</text>
<g opacity="1.0"><circle cx="729.4" cy="271.7" r="16.5" fill="url(#halo)"/><circle cx="729.4" cy="271.7" r="14.5" fill="#1d1e1f"/><circle cx="729.4" cy="271.7" r="14.0" fill="none" stroke="#262728" stroke-width="1"/><circle cx="729.4" cy="271.7" r="12.100000000000001" fill="#141515"/><circle cx="729.4" cy="271.7" r="11.3" fill="url(#kd)"/><circle cx="729.4" cy="271.7" r="10.8" fill="none" stroke="url(#kdrim)" stroke-width="1"/><line x1="725.56" y1="275.54" x2="723.01" y2="278.09" stroke="#e8e8e8" stroke-width="1.7" stroke-linecap="butt"/></g>
<text x="709" y="285.0" font-size="11.5" fill="#d8d8d8" text-anchor="middle" dominant-baseline="central" font-weight="normal" >A</text>
<g opacity="1.0"><circle cx="794.5" cy="271.7" r="16.5" fill="url(#halo)"/><circle cx="794.5" cy="271.7" r="14.5" fill="#1d1e1f"/><circle cx="794.5" cy="271.7" r="14.0" fill="none" stroke="#262728" stroke-width="1"/><circle cx="794.5" cy="271.7" r="12.100000000000001" fill="#141515"/><path d="M785.24,280.96A13.1,13.1 0 1 1 805.23,279.21" fill="none" stroke="#4f7fb8" stroke-width="2.10"/><circle cx="794.5" cy="271.7" r="11.3" fill="url(#kd)"/><circle cx="794.5" cy="271.7" r="10.8" fill="none" stroke="url(#kdrim)" stroke-width="1"/><line x1="798.94" y1="274.81" x2="801.91" y2="276.89" stroke="#e8e8e8" stroke-width="1.7" stroke-linecap="butt"/></g>
<text x="774.6" y="285.0" font-size="11.5" fill="#d8d8d8" text-anchor="middle" dominant-baseline="central" font-weight="normal" >D</text>
<g opacity="1.0"><circle cx="859.3" cy="271.7" r="16.5" fill="url(#halo)"/><circle cx="859.3" cy="271.7" r="14.5" fill="#1d1e1f"/><circle cx="859.3" cy="271.7" r="14.0" fill="none" stroke="#262728" stroke-width="1"/><circle cx="859.3" cy="271.7" r="12.100000000000001" fill="#141515"/><circle cx="859.3" cy="271.7" r="11.3" fill="url(#kd)"/><circle cx="859.3" cy="271.7" r="10.8" fill="none" stroke="url(#kdrim)" stroke-width="1"/><line x1="855.46" y1="275.54" x2="852.91" y2="278.09" stroke="#e8e8e8" stroke-width="1.7" stroke-linecap="butt"/></g>
<text x="839" y="285.0" font-size="11.5" fill="#d8d8d8" text-anchor="middle" dominant-baseline="central" font-weight="normal" >S</text>
<g opacity="1.0"><circle cx="924.4" cy="271.7" r="16.5" fill="url(#halo)"/><circle cx="924.4" cy="271.7" r="14.5" fill="#1d1e1f"/><circle cx="924.4" cy="271.7" r="14.0" fill="none" stroke="#262728" stroke-width="1"/><circle cx="924.4" cy="271.7" r="12.100000000000001" fill="#141515"/><path d="M915.14,280.96A13.1,13.1 0 0 1 913.06,265.15" fill="none" stroke="#4f7fb8" stroke-width="2.10"/><circle cx="924.4" cy="271.7" r="11.3" fill="url(#kd)"/><circle cx="924.4" cy="271.7" r="10.8" fill="none" stroke="url(#kdrim)" stroke-width="1"/><line x1="919.70" y1="268.99" x2="916.57" y2="267.18" stroke="#e8e8e8" stroke-width="1.7" stroke-linecap="butt"/></g>
<text x="905" y="285.0" font-size="11.5" fill="#d8d8d8" text-anchor="middle" dominant-baseline="central" font-weight="normal" >R</text>
<rect x="898" y="320" width="5" height="144" fill="#4a5a6c"/>
<rect x="748.0" y="320" width="1" height="144" fill="#3f6a9a"/>
<rect x="802.0" y="320" width="1" height="144" fill="#3f6a9a"/>
<rect x="855.0" y="320" width="1" height="144" fill="#3f6a9a"/>
<rect x="908.8" y="320" width="1" height="144" fill="#3f6a9a"/>
<path d="M695.8,336.0 L696.8,340.5 L697.8,344.8 L698.8,348.9 L699.8,352.9 L700.8,356.8 L701.8,360.5 L702.8,364.1 L703.8,367.6 L704.8,370.9 L705.8,374.1 L706.8,377.3 L707.8,380.3 L708.8,383.2 L709.8,386.0 L710.8,388.7 L711.8,391.3 L712.8,393.8 L713.8,396.2 L714.8,398.6 L715.8,400.8 L716.8,403.0 L717.8,405.1 L718.8,407.1 L719.8,409.1 L720.8,411.0 L721.8,412.8 L722.8,414.6 L723.8,416.3 L724.8,417.9 L725.8,419.5 L726.8,421.0 L727.8,422.5 L728.8,423.9 L729.8,425.3 L730.8,426.6 L731.8,427.9 L732.8,429.1 L733.8,430.3 L734.8,431.5 L735.8,432.6 L736.8,433.6 L737.8,434.7 L738.8,435.7 L739.8,436.6 L740.8,437.5 L741.8,438.4 L742.8,439.3 L743.8,440.1 L744.8,440.9 L745.8,441.7 L746.8,442.5 L747.8,443.2 L748.8,443.9 L749.8,444.5 L750.8,445.2 L751.8,445.8 L752.8,446.4 L753.8,447.0 L754.8,447.6 L755.8,448.1 L756.8,448.6 L757.8,449.1 L758.8,449.6 L759.8,450.1 L760.8,450.5 L761.8,451.0 L762.8,451.4 L763.8,451.8 L764.8,452.2 L765.8,452.6 L766.8,452.9 L767.8,453.3 L768.8,453.6 L769.8,454.0 L770.8,454.3 L771.8,454.6 L772.8,454.9 L773.8,455.2 L774.8,455.4 L775.8,455.7 L776.8,456.0 L777.8,456.2 L778.8,456.4 L779.8,456.7 L780.8,456.9 L781.8,457.1 L782.8,457.3 L783.8,457.5 L784.8,457.7 L785.8,457.9 L786.8,458.1 L787.8,458.2 L788.8,458.4 L789.8,458.6 L790.8,458.7 L791.8,458.9 L792.8,459.0 L793.8,459.2 L794.8,459.3 L795.8,459.4 L796.8,459.6 L797.8,459.7 L798.8,459.8 L799.8,459.9 L800.8,460.0 L801.8,460.1 L802.8,460.2 L803.8,460.3 L804.8,460.4 L805.8,460.5 L806.8,460.6 L807.8,460.7 L808.8,460.8 L809.8,460.8 L810.8,460.9 L811.8,461.0 L812.8,461.1 L813.8,461.1 L814.8,461.2 L815.8,461.3 L816.8,461.3 L817.8,461.4 L818.8,461.4 L819.8,461.5 L820.8,461.5 L821.8,461.6 L822.8,461.6 L823.8,461.7 L824.8,461.7 L825.8,461.8 L826.8,461.8 L827.8,461.9 L828.8,461.9 L829.8,461.9 L830.8,462.0 L831.8,462.0 L832.8,462.0 L833.8,462.1 L834.8,462.1 L835.8,462.1 L836.8,462.2 L837.8,462.2 L838.8,462.2 L839.8,462.3 L840.8,462.3 L841.8,462.3 L842.8,462.3 L843.8,462.4 L844.8,462.4 L845.8,462.4 L846.8,462.4 L847.8,462.4 L848.8,462.5 L849.8,462.5 L850.8,462.5 L851.8,462.5 L852.8,462.5 L853.8,462.6 L854.8,462.6 L855.8,462.6 L856.8,462.6 L857.8,462.6 L858.8,462.6 L859.8,462.6 L860.8,462.6 L861.8,462.7 L862.8,462.7 L863.8,462.7 L864.8,462.7 L865.8,462.7 L866.8,462.7 L867.8,462.7 L868.8,462.7 L869.8,462.7 L909.3,463 L909.3,464 L695.8,464Z" fill="#536878"/>
<path d="M798.8,459.8 L799.8,459.9 L800.8,460.0 L801.8,460.1 L802.8,460.2 L803.8,460.3 L804.8,460.4 L805.8,460.5 L806.8,460.6 L807.8,460.7 L808.8,460.8 L809.8,460.8 L810.8,460.9 L811.8,461.0 L812.8,461.1 L813.8,461.1 L814.8,461.2 L815.8,461.3 L816.8,461.3 L817.8,461.4 L818.8,461.4 L819.8,461.5 L820.8,461.5 L821.8,461.6 L822.8,461.6 L823.8,461.7 L824.8,461.7 L825.8,461.8 L826.8,461.8 L827.8,461.9 L828.8,461.9 L829.8,461.9 L830.8,462.0 L831.8,462.0 L832.8,462.0 L833.8,462.1 L834.8,462.1 L835.8,462.1 L836.8,462.2 L837.8,462.2 L838.8,462.2 L839.8,462.3 L840.8,462.3 L841.8,462.3 L842.8,462.3 L843.8,462.4 L844.8,462.4 L845.8,462.4 L846.8,462.4 L847.8,462.4 L848.8,462.5 L849.8,462.5 L850.8,462.5 L851.8,462.5 L852.8,462.5 L853.8,462.6 L854.8,462.6 L855.8,462.6 L856.8,462.6 L857.8,462.6 L858.8,462.6 L859.8,462.6 L860.8,462.6 L861.8,462.7 L862.8,462.7 L863.8,462.7 L864.8,462.7 L865.8,462.7 L866.8,462.7 L867.8,462.7 L868.8,462.7 L869.8,462.7 L913.3,463.2" fill="none" stroke="#6b9fd8" stroke-width="1.1"/>
<path d="M695.8,336.0 L696.8,340.5 L697.8,344.8 L698.8,348.9 L699.8,352.9 L700.8,356.8 L701.8,360.5 L702.8,364.1 L703.8,367.6 L704.8,370.9 L705.8,374.1 L706.8,377.3 L707.8,380.3 L708.8,383.2 L709.8,386.0 L710.8,388.7 L711.8,391.3 L712.8,393.8 L713.8,396.2 L714.8,398.6 L715.8,400.8 L716.8,403.0 L717.8,405.1 L718.8,407.1 L719.8,409.1 L720.8,411.0 L721.8,412.8 L722.8,414.6 L723.8,416.3 L724.8,417.9 L725.8,419.5 L726.8,421.0 L727.8,422.5 L728.8,423.9 L729.8,425.3 L730.8,426.6 L731.8,427.9 L732.8,429.1 L733.8,430.3 L734.8,431.5 L735.8,432.6 L736.8,433.6 L737.8,434.7 L738.8,435.7 L739.8,436.6 L740.8,437.5 L741.8,438.4 L742.8,439.3 L743.8,440.1 L744.8,440.9 L745.8,441.7 L746.8,442.5 L747.8,443.2 L748.8,443.9 L749.8,444.5 L750.8,445.2 L751.8,445.8 L752.8,446.4 L753.8,447.0 L754.8,447.6 L755.8,448.1 L756.8,448.6 L757.8,449.1 L758.8,449.6 L759.8,450.1 L760.8,450.5 L761.8,451.0 L762.8,451.4 L763.8,451.8 L764.8,452.2 L765.8,452.6 L766.8,452.9 L767.8,453.3 L768.8,453.6 L769.8,454.0 L770.8,454.3 L771.8,454.6 L772.8,454.9 L773.8,455.2 L774.8,455.4 L775.8,455.7 L776.8,456.0 L777.8,456.2 L778.8,456.4 L779.8,456.7 L780.8,456.9 L781.8,457.1 L782.8,457.3 L783.8,457.5 L784.8,457.7 L785.8,457.9 L786.8,458.1 L787.8,458.2 L788.8,458.4 L789.8,458.6 L790.8,458.7 L791.8,458.9 L792.8,459.0 L793.8,459.2 L794.8,459.3 L795.8,459.4 L796.8,459.6 L797.8,459.7 L798.8,459.8 L799.8,459.9" fill="none" stroke="#7fb2e8" stroke-width="1.9"/>
<rect x="694.8" y="336" width="1.5" height="128" fill="#8fbdea"/>
<g clip-path="url(#clip315)">
<circle cx="695.3" cy="336" r="4.8" fill="#c3d4e4"/>
<circle cx="697.5" cy="463" r="3.5" fill="#c3d4e4" stroke="#c3d4e4" stroke-width="1"/>
<circle cx="797" cy="463" r="3.5" fill="#434748" stroke="#c3d4e4" stroke-width="1"/>
<circle cx="899" cy="463" r="3.5" fill="#c3d4e4" stroke="#c3d4e4" stroke-width="1"/>
<circle cx="905" cy="463" r="3.5" fill="#c3d4e4" stroke="#c3d4e4" stroke-width="1"/>
<circle cx="914" cy="463" r="3.5" fill="#c3d4e4" stroke="#c3d4e4" stroke-width="1"/>
</g>
<text x="751.5" y="455" font-size="8" fill="#8c9fba" text-anchor="start" dominant-baseline="central" font-weight="normal" >5.00 s</text>
<text x="805.5" y="455" font-size="8" fill="#8c9fba" text-anchor="start" dominant-baseline="central" font-weight="normal" >10.00 s</text>
<text x="858.5" y="455" font-size="8" fill="#8c9fba" text-anchor="start" dominant-baseline="central" font-weight="normal" >15.00 s</text>
<text x="912.3" y="455" font-size="8" fill="#8c9fba" text-anchor="start" dominant-baseline="central" font-weight="normal" >20.00 s</text>
<text x="959" y="325.5" font-size="12.2" fill="#c0c8d2" text-anchor="end" dominant-baseline="central" font-weight="normal" >Env 2</text>
<g opacity="1.0"><circle cx="724.6" cy="485.8" r="16.5" fill="url(#halo)"/><circle cx="724.6" cy="485.8" r="14.5" fill="#1d1e1f"/><circle cx="724.6" cy="485.8" r="14.0" fill="none" stroke="#262728" stroke-width="1"/><circle cx="724.6" cy="485.8" r="12.100000000000001" fill="#141515"/><circle cx="724.6" cy="485.8" r="11.3" fill="url(#kd)"/><circle cx="724.6" cy="485.8" r="10.8" fill="none" stroke="url(#kdrim)" stroke-width="1"/><line x1="720.76" y1="489.64" x2="718.21" y2="492.19" stroke="#e8e8e8" stroke-width="1.7" stroke-linecap="butt"/></g>
<text x="705.3" y="499.1" font-size="11.5" fill="#d8d8d8" text-anchor="middle" dominant-baseline="central" font-weight="normal" >Δ</text>
<g opacity="1.0"><circle cx="777.5" cy="485.8" r="16.5" fill="url(#halo)"/><circle cx="777.5" cy="485.8" r="14.5" fill="#1d1e1f"/><circle cx="777.5" cy="485.8" r="14.0" fill="none" stroke="#262728" stroke-width="1"/><circle cx="777.5" cy="485.8" r="12.100000000000001" fill="#141515"/><circle cx="777.5" cy="485.8" r="11.3" fill="url(#kd)"/><circle cx="777.5" cy="485.8" r="10.8" fill="none" stroke="url(#kdrim)" stroke-width="1"/><line x1="773.66" y1="489.64" x2="771.11" y2="492.19" stroke="#e8e8e8" stroke-width="1.7" stroke-linecap="butt"/></g>
<text x="757.3" y="499.1" font-size="11.5" fill="#d8d8d8" text-anchor="middle" dominant-baseline="central" font-weight="normal" >A</text>
<g opacity="1.0"><circle cx="830.2" cy="485.8" r="16.5" fill="url(#halo)"/><circle cx="830.2" cy="485.8" r="14.5" fill="#1d1e1f"/><circle cx="830.2" cy="485.8" r="14.0" fill="none" stroke="#262728" stroke-width="1"/><circle cx="830.2" cy="485.8" r="12.100000000000001" fill="#141515"/><path d="M820.94,495.06A13.1,13.1 0 1 1 840.93,493.31" fill="none" stroke="#4f7fb8" stroke-width="2.10"/><circle cx="830.2" cy="485.8" r="11.3" fill="url(#kd)"/><circle cx="830.2" cy="485.8" r="10.8" fill="none" stroke="url(#kdrim)" stroke-width="1"/><line x1="834.64" y1="488.91" x2="837.61" y2="490.99" stroke="#e8e8e8" stroke-width="1.7" stroke-linecap="butt"/></g>
<text x="810.8" y="499.1" font-size="11.5" fill="#d8d8d8" text-anchor="middle" dominant-baseline="central" font-weight="normal" >D</text>
<g opacity="1.0"><circle cx="883.1" cy="485.8" r="16.5" fill="url(#halo)"/><circle cx="883.1" cy="485.8" r="14.5" fill="#1d1e1f"/><circle cx="883.1" cy="485.8" r="14.0" fill="none" stroke="#262728" stroke-width="1"/><circle cx="883.1" cy="485.8" r="12.100000000000001" fill="#141515"/><circle cx="883.1" cy="485.8" r="11.3" fill="url(#kd)"/><circle cx="883.1" cy="485.8" r="10.8" fill="none" stroke="url(#kdrim)" stroke-width="1"/><line x1="879.26" y1="489.64" x2="876.71" y2="492.19" stroke="#e8e8e8" stroke-width="1.7" stroke-linecap="butt"/></g>
<text x="863.5" y="499.1" font-size="11.5" fill="#d8d8d8" text-anchor="middle" dominant-baseline="central" font-weight="normal" >S</text>
<g opacity="1.0"><circle cx="936.3" cy="485.8" r="16.5" fill="url(#halo)"/><circle cx="936.3" cy="485.8" r="14.5" fill="#1d1e1f"/><circle cx="936.3" cy="485.8" r="14.0" fill="none" stroke="#262728" stroke-width="1"/><circle cx="936.3" cy="485.8" r="12.100000000000001" fill="#141515"/><path d="M927.04,495.06A13.1,13.1 0 0 1 937.44,472.75" fill="none" stroke="#4f7fb8" stroke-width="2.10"/><circle cx="936.3" cy="485.8" r="11.3" fill="url(#kd)"/><circle cx="936.3" cy="485.8" r="10.8" fill="none" stroke="url(#kdrim)" stroke-width="1"/><line x1="936.77" y1="480.40" x2="937.09" y2="476.79" stroke="#e8e8e8" stroke-width="1.7" stroke-linecap="butt"/></g>
<text x="916.7" y="499.1" font-size="11.5" fill="#d8d8d8" text-anchor="middle" dominant-baseline="central" font-weight="normal" >R</text>
<text x="1020.3" y="111" font-size="16" fill="#b2b4b6" text-anchor="middle" dominant-baseline="central" font-weight="normal" letter-spacing:0.5px>Global</text>
<g opacity="1.0"><circle cx="1020.3" cy="156.3" r="23.4" fill="url(#halo)"/><circle cx="1020.3" cy="156.3" r="21.4" fill="#1d1e1f"/><circle cx="1020.3" cy="156.3" r="20.9" fill="none" stroke="#262728" stroke-width="1"/><circle cx="1020.3" cy="156.3" r="17.8" fill="#141515"/><circle cx="1020.3" cy="156.3" r="17" fill="url(#kd)"/><circle cx="1020.3" cy="156.3" r="16.5" fill="none" stroke="url(#kdrim)" stroke-width="1"/><line x1="1020.30" y1="146.78" x2="1020.30" y2="141.00" stroke="#e8e8e8" stroke-width="2.0" stroke-linecap="butt"/></g>
<rect x="1019.8" y="135" width="1" height="4" fill="#4f7fb8"/>
<text x="1020.3" y="188.8" font-size="12.4" fill="#e0e0e0" text-anchor="middle" dominant-baseline="central" font-weight="normal" >Volume</text>
<g opacity="1.0"><circle cx="1020.3" cy="227.6" r="23.4" fill="url(#halo)"/><circle cx="1020.3" cy="227.6" r="21.4" fill="#1d1e1f"/><circle cx="1020.3" cy="227.6" r="20.9" fill="none" stroke="#262728" stroke-width="1"/><circle cx="1020.3" cy="227.6" r="17.3" fill="#141515"/><path d="M1006.69,241.21A19.25,19.25 0 1 1 1033.91,241.21" fill="none" stroke="#5b8fd0" stroke-width="4.40"/><circle cx="1020.3" cy="227.6" r="16.5" fill="url(#kd)"/><circle cx="1020.3" cy="227.6" r="16.0" fill="none" stroke="url(#kdrim)" stroke-width="1"/><line x1="1026.83" y1="234.13" x2="1030.80" y2="238.10" stroke="#e8e8e8" stroke-width="2.0" stroke-linecap="butt"/></g>
<text x="1020.3" y="259.4" font-size="12.4" fill="#e0e0e0" text-anchor="middle" dominant-baseline="central" font-weight="normal" >Velocity</text>
<path d="M1014,271h8l-4,4.500z" fill="#7d7f81"/>
<text x="1020" y="306" font-size="10.3" fill="#1e1e22" text-anchor="middle" dominant-baseline="central" font-weight="normal" >Poly</text>
<text x="1020" y="336" font-size="10.3" fill="#d0d2d4" text-anchor="middle" dominant-baseline="central" font-weight="normal" >Mono</text>
<text x="1020" y="366" font-size="10.3" fill="#717375" text-anchor="middle" dominant-baseline="central" font-weight="normal" >Glide</text>
<g opacity="0.8"><circle cx="1020.1" cy="412.8" r="23" fill="url(#halo)"/><circle cx="1020.1" cy="412.8" r="21" fill="#1d1e1f"/><circle cx="1020.1" cy="412.8" r="20.5" fill="none" stroke="#262728" stroke-width="1"/><circle cx="1020.1" cy="412.8" r="17.3" fill="#141515"/><circle cx="1020.1" cy="412.8" r="16.5" fill="url(#kd)"/></g><path d="M1006.63,426.27A19.05,19.05 0 0 1 1020.10,393.75" fill="none" stroke="#3f6a9a" stroke-width="3.00"/><line x1="1020.10" y1="403.23" x2="1020.10" y2="398.61" stroke="#c4c4c4" stroke-width="1.6"/>
<text x="1020.3" y="445.2" font-size="12.2" fill="#8f9193" text-anchor="middle" dominant-baseline="central" font-weight="normal" >Glide</text>
<g clip-path="url(#lgclip)"><rect x="994" y="465" width="56" height="43" fill="url(#lgfill)"/><path d="M994.7,491.5 C1001,489 1003.5,478 1005.2,464 L1011.3,508 L1018.8,464 L1024.5,508 L1031.5,464 L1037.2,508 L1037.6,488 C1037.6,480 1043,477 1049.5,484.5" fill="none" stroke="#232527" stroke-width="3" stroke-linejoin="miter" stroke-miterlimit="10"/></g>
<text x="72" y="550.5" font-size="10.4" fill="#222" text-anchor="middle" dominant-baseline="central" font-weight="normal" textLength="20.5" lengthAdjust="spacing">FX A</text>
<text x="112" y="550.5" font-size="10.4" fill="#d4d4d4" text-anchor="middle" dominant-baseline="central" font-weight="normal" textLength="20.5" lengthAdjust="spacing">FX B</text>
<text x="72" y="581.5" font-size="10.4" fill="#d4d4d4" text-anchor="middle" dominant-baseline="central" font-weight="normal" >Mod A</text>
<text x="112" y="581.5" font-size="10.4" fill="#d4d4d4" text-anchor="middle" dominant-baseline="central" font-weight="normal" >Mod B</text>
<text x="141" y="539.2" font-size="13" fill="#e4e4e4" text-anchor="start" dominant-baseline="central" font-weight="normal" >Modulation</text>
<text x="245" y="540.2" font-size="10.4" fill="#55575a" text-anchor="middle" dominant-baseline="central" font-weight="normal" >Chorus</text>
<text x="295" y="540.2" font-size="10.4" fill="#2c2d2e" text-anchor="middle" dominant-baseline="central" font-weight="normal" >Flanger</text>
<text x="345" y="540.2" font-size="10.4" fill="#55575a" text-anchor="middle" dominant-baseline="central" font-weight="normal" >Phaser</text>
<text x="164.5" y="575.2" font-size="10.4" fill="#55575a" text-anchor="middle" dominant-baseline="central" font-weight="normal" >Mono</text>
<g opacity="0.32"><circle cx="209.6" cy="570.9" r="16.5" fill="url(#halo)"/><circle cx="209.6" cy="570.9" r="14.5" fill="#1d1e1f"/><circle cx="209.6" cy="570.9" r="14.0" fill="none" stroke="#262728" stroke-width="1"/><circle cx="209.6" cy="570.9" r="12.3" fill="#141515"/><circle cx="209.6" cy="570.9" r="11.5" fill="url(#kd)"/></g><path d="M200.20,580.30A13.3,13.3 0 1 1 222.85,572.06" fill="none" stroke="#2f435a" stroke-width="2.50"/><line x1="217.16" y1="571.56" x2="219.45" y2="571.76" stroke="#858585" stroke-width="1.6"/>
<text x="209.6" y="593" font-size="11" fill="#5e6062" text-anchor="middle" dominant-baseline="central" font-weight="normal" >Delay</text>
<g opacity="0.32"><circle cx="255.7" cy="570.9" r="16.5" fill="url(#halo)"/><circle cx="255.7" cy="570.9" r="14.5" fill="#1d1e1f"/><circle cx="255.7" cy="570.9" r="14.0" fill="none" stroke="#262728" stroke-width="1"/><circle cx="255.7" cy="570.9" r="12.3" fill="#141515"/><circle cx="255.7" cy="570.9" r="11.5" fill="url(#kd)"/></g><path d="M246.30,580.30A13.3,13.3 0 1 1 265.89,562.35" fill="none" stroke="#2f435a" stroke-width="2.50"/><line x1="261.51" y1="566.02" x2="263.28" y2="564.54" stroke="#858585" stroke-width="1.6"/>
<text x="255.7" y="593" font-size="11" fill="#5e6062" text-anchor="middle" dominant-baseline="central" font-weight="normal" >Speed</text>
<g opacity="0.32"><circle cx="301.4" cy="570.9" r="16.5" fill="url(#halo)"/><circle cx="301.4" cy="570.9" r="14.5" fill="#1d1e1f"/><circle cx="301.4" cy="570.9" r="14.0" fill="none" stroke="#262728" stroke-width="1"/><circle cx="301.4" cy="570.9" r="12.3" fill="#141515"/><circle cx="301.4" cy="570.9" r="11.5" fill="url(#kd)"/></g><path d="M292.00,580.30A13.3,13.3 0 0 1 291.21,562.35" fill="none" stroke="#2f435a" stroke-width="2.50"/><line x1="295.59" y1="566.02" x2="293.82" y2="564.54" stroke="#858585" stroke-width="1.6"/>
<text x="301.4" y="593" font-size="11" fill="#5e6062" text-anchor="middle" dominant-baseline="central" font-weight="normal" >Width</text>
<g opacity="0.32"><circle cx="347.5" cy="570.9" r="16.5" fill="url(#halo)"/><circle cx="347.5" cy="570.9" r="14.5" fill="#1d1e1f"/><circle cx="347.5" cy="570.9" r="14.0" fill="none" stroke="#262728" stroke-width="1"/><circle cx="347.5" cy="570.9" r="12.3" fill="#141515"/><circle cx="347.5" cy="570.9" r="11.5" fill="url(#kd)"/></g><path d="M338.10,580.30A13.3,13.3 0 0 1 337.31,562.35" fill="none" stroke="#2f435a" stroke-width="2.50"/><line x1="341.69" y1="566.02" x2="339.92" y2="564.54" stroke="#858585" stroke-width="1.6"/>
<text x="347.5" y="593" font-size="11" fill="#5e6062" text-anchor="middle" dominant-baseline="central" font-weight="normal" >FB</text>
<text x="394.5" y="575.2" font-size="10.4" fill="#55575a" text-anchor="middle" dominant-baseline="central" font-weight="normal" >Sync</text>
<g opacity="0.32"><circle cx="447.1" cy="560" r="23.5" fill="url(#halo)"/><circle cx="447.1" cy="560" r="21.5" fill="#1d1e1f"/><circle cx="447.1" cy="560" r="21.0" fill="none" stroke="#262728" stroke-width="1"/><circle cx="447.1" cy="560" r="17.8" fill="#141515"/><circle cx="447.1" cy="560" r="17" fill="url(#kd)"/></g><path d="M433.28,573.82A19.55,19.55 0 0 1 430.17,550.23" fill="none" stroke="#2f435a" stroke-width="3.00"/><line x1="438.56" y1="555.07" x2="434.44" y2="552.69" stroke="#858585" stroke-width="1.6"/>
<text x="447.1" y="593" font-size="11" fill="#5e6062" text-anchor="middle" dominant-baseline="central" font-weight="normal" >Depth</text>
<text x="497" y="539.2" font-size="13" fill="#e4e4e4" text-anchor="start" dominant-baseline="central" font-weight="normal" >Delay</text>
<text x="582.5" y="539.5" font-size="12" fill="#5d5f61" text-anchor="middle" dominant-baseline="central" font-weight="normal" >Off</text>
<path d="M607,536.500h8l-4,4.500z" fill="#505254"/>
<text x="661" y="540.7" font-size="10.4" fill="#55575a" text-anchor="middle" dominant-baseline="central" font-weight="normal" >Reverb</text>
<g opacity="0.32"><circle cx="515.2" cy="570.3" r="16.5" fill="url(#halo)"/><circle cx="515.2" cy="570.3" r="14.5" fill="#1d1e1f"/><circle cx="515.2" cy="570.3" r="14.0" fill="none" stroke="#262728" stroke-width="1"/><circle cx="515.2" cy="570.3" r="12.3" fill="#141515"/><circle cx="515.2" cy="570.3" r="11.5" fill="url(#kd)"/></g><line x1="509.83" y1="575.67" x2="508.21" y2="577.29" stroke="#858585" stroke-width="1.6"/>
<text x="515.2" y="593" font-size="11" fill="#5e6062" text-anchor="middle" dominant-baseline="central" font-weight="normal" >Low</text>
<g opacity="0.32"><circle cx="561.4" cy="570.3" r="16.5" fill="url(#halo)"/><circle cx="561.4" cy="570.3" r="14.5" fill="#1d1e1f"/><circle cx="561.4" cy="570.3" r="14.0" fill="none" stroke="#262728" stroke-width="1"/><circle cx="561.4" cy="570.3" r="12.3" fill="#141515"/><circle cx="561.4" cy="570.3" r="11.5" fill="url(#kd)"/></g><path d="M552.00,579.70A13.3,13.3 0 1 1 572.29,577.93" fill="none" stroke="#2f435a" stroke-width="2.50"/><line x1="567.62" y1="574.65" x2="569.50" y2="575.97" stroke="#858585" stroke-width="1.6"/>
<text x="561.4" y="593" font-size="11" fill="#5e6062" text-anchor="middle" dominant-baseline="central" font-weight="normal" >High</text>
<g opacity="0.32"><circle cx="623" cy="570.3" r="16.5" fill="url(#halo)"/><circle cx="623" cy="570.3" r="14.5" fill="#1d1e1f"/><circle cx="623" cy="570.3" r="14.0" fill="none" stroke="#262728" stroke-width="1"/><circle cx="623" cy="570.3" r="12.3" fill="#141515"/><circle cx="623" cy="570.3" r="11.5" fill="url(#kd)"/></g><path d="M613.60,579.70A13.3,13.3 0 0 1 626.44,557.45" fill="none" stroke="#2f435a" stroke-width="2.50"/><line x1="624.96" y1="562.97" x2="625.56" y2="560.75" stroke="#858585" stroke-width="1.6"/>
<text x="623" y="593" font-size="11" fill="#5e6062" text-anchor="middle" dominant-baseline="central" font-weight="normal" >1/4</text>
<g opacity="0.32"><circle cx="669.3" cy="570.3" r="16.5" fill="url(#halo)"/><circle cx="669.3" cy="570.3" r="14.5" fill="#1d1e1f"/><circle cx="669.3" cy="570.3" r="14.0" fill="none" stroke="#262728" stroke-width="1"/><circle cx="669.3" cy="570.3" r="12.3" fill="#141515"/><circle cx="669.3" cy="570.3" r="11.5" fill="url(#kd)"/></g><path d="M659.90,579.70A13.3,13.3 0 0 1 664.75,557.80" fill="none" stroke="#2f435a" stroke-width="2.50"/><line x1="666.70" y1="563.17" x2="665.92" y2="561.01" stroke="#858585" stroke-width="1.6"/>
<text x="669.3" y="593" font-size="11" fill="#5e6062" text-anchor="middle" dominant-baseline="central" font-weight="normal" >FB</text>
<g opacity="0.32"><circle cx="718.9" cy="560" r="23.5" fill="url(#halo)"/><circle cx="718.9" cy="560" r="21.5" fill="#1d1e1f"/><circle cx="718.9" cy="560" r="21.0" fill="none" stroke="#262728" stroke-width="1"/><circle cx="718.9" cy="560" r="17.8" fill="#141515"/><circle cx="718.9" cy="560" r="17" fill="url(#kd)"/></g><path d="M705.08,573.82A19.55,19.55 0 0 1 725.59,541.63" fill="none" stroke="#2f435a" stroke-width="3.00"/><line x1="722.27" y1="550.73" x2="723.90" y2="546.26" stroke="#858585" stroke-width="1.6"/>
<text x="718.9" y="593" font-size="11" fill="#5e6062" text-anchor="middle" dominant-baseline="central" font-weight="normal" >Mix</text>
<text x="761" y="539.2" font-size="13" fill="#e4e4e4" text-anchor="start" dominant-baseline="central" font-weight="normal" >Reverb</text>
<g opacity="0.32"><circle cx="785.7" cy="570.7" r="16.5" fill="url(#halo)"/><circle cx="785.7" cy="570.7" r="14.5" fill="#1d1e1f"/><circle cx="785.7" cy="570.7" r="14.0" fill="none" stroke="#262728" stroke-width="1"/><circle cx="785.7" cy="570.7" r="12.3" fill="#141515"/><circle cx="785.7" cy="570.7" r="11.5" fill="url(#kd)"/></g><line x1="780.33" y1="576.07" x2="778.71" y2="577.69" stroke="#858585" stroke-width="1.6"/>
<text x="785.7" y="593" font-size="11" fill="#5e6062" text-anchor="middle" dominant-baseline="central" font-weight="normal" >Pre</text>
<g opacity="0.32"><circle cx="831.7" cy="570.7" r="16.5" fill="url(#halo)"/><circle cx="831.7" cy="570.7" r="14.5" fill="#1d1e1f"/><circle cx="831.7" cy="570.7" r="14.0" fill="none" stroke="#262728" stroke-width="1"/><circle cx="831.7" cy="570.7" r="12.3" fill="#141515"/><circle cx="831.7" cy="570.7" r="11.5" fill="url(#kd)"/></g><path d="M822.30,580.10A13.3,13.3 0 0 1 827.15,558.20" fill="none" stroke="#2f435a" stroke-width="2.50"/><line x1="829.10" y1="563.57" x2="828.32" y2="561.41" stroke="#858585" stroke-width="1.6"/>
<text x="831.7" y="593" font-size="11" fill="#5e6062" text-anchor="middle" dominant-baseline="central" font-weight="normal" >Damp</text>
<g opacity="0.32"><circle cx="935.7" cy="570.7" r="16.5" fill="url(#halo)"/><circle cx="935.7" cy="570.7" r="14.5" fill="#1d1e1f"/><circle cx="935.7" cy="570.7" r="14.0" fill="none" stroke="#262728" stroke-width="1"/><circle cx="935.7" cy="570.7" r="12.3" fill="#141515"/><circle cx="935.7" cy="570.7" r="11.5" fill="url(#kd)"/></g><line x1="930.33" y1="576.07" x2="928.71" y2="577.69" stroke="#858585" stroke-width="1.6"/>
<text x="935.7" y="593" font-size="11" fill="#5e6062" text-anchor="middle" dominant-baseline="central" font-weight="normal" >Low</text>
<g opacity="0.32"><circle cx="981.7" cy="570.7" r="16.5" fill="url(#halo)"/><circle cx="981.7" cy="570.7" r="14.5" fill="#1d1e1f"/><circle cx="981.7" cy="570.7" r="14.0" fill="none" stroke="#262728" stroke-width="1"/><circle cx="981.7" cy="570.7" r="12.3" fill="#141515"/><circle cx="981.7" cy="570.7" r="11.5" fill="url(#kd)"/></g><path d="M972.30,580.10A13.3,13.3 0 1 1 992.59,578.33" fill="none" stroke="#2f435a" stroke-width="2.50"/><line x1="987.92" y1="575.05" x2="989.80" y2="576.37" stroke="#858585" stroke-width="1.6"/>
<text x="981.7" y="593" font-size="11" fill="#5e6062" text-anchor="middle" dominant-baseline="central" font-weight="normal" >High</text>
<g opacity="0.32"><circle cx="881.7" cy="559.3" r="23.5" fill="url(#halo)"/><circle cx="881.7" cy="559.3" r="21.5" fill="#1d1e1f"/><circle cx="881.7" cy="559.3" r="21.0" fill="none" stroke="#262728" stroke-width="1"/><circle cx="881.7" cy="559.3" r="17.8" fill="#141515"/><circle cx="881.7" cy="559.3" r="17" fill="url(#kd)"/></g><path d="M867.88,573.12A19.55,19.55 0 0 1 881.70,539.75" fill="none" stroke="#2f435a" stroke-width="3.00"/><line x1="881.70" y1="549.44" x2="881.70" y2="544.68" stroke="#858585" stroke-width="1.6"/>
<text x="881.7" y="593" font-size="11" fill="#5e6062" text-anchor="middle" dominant-baseline="central" font-weight="normal" >Size</text>
<g opacity="0.32"><circle cx="1031.7" cy="559.3" r="23.5" fill="url(#halo)"/><circle cx="1031.7" cy="559.3" r="21.5" fill="#1d1e1f"/><circle cx="1031.7" cy="559.3" r="21.0" fill="none" stroke="#262728" stroke-width="1"/><circle cx="1031.7" cy="559.3" r="17.8" fill="#141515"/><circle cx="1031.7" cy="559.3" r="17" fill="url(#kd)"/></g><path d="M1017.88,573.12A19.55,19.55 0 0 1 1023.44,541.58" fill="none" stroke="#2f435a" stroke-width="3.00"/><line x1="1027.53" y1="550.36" x2="1025.52" y2="546.05" stroke="#858585" stroke-width="1.6"/>
<text x="1031.7" y="593" font-size="11" fill="#5e6062" text-anchor="middle" dominant-baseline="central" font-weight="normal" >Mix</text>
<text x="319" y="612.6" font-size="9.5" fill="#7c8794" text-anchor="start" dominant-baseline="central" font-weight="normal" >C 1</text>
<text x="475" y="612.6" font-size="9.5" fill="#7c8794" text-anchor="start" dominant-baseline="central" font-weight="normal" >C 2</text>
<text x="631" y="612.6" font-size="9.5" fill="#7c8794" text-anchor="start" dominant-baseline="central" font-weight="normal" >C 3</text>
<text x="787" y="612.6" font-size="9.5" fill="#7c8794" text-anchor="start" dominant-baseline="central" font-weight="normal" >C 4</text>
<text x="943" y="612.6" font-size="9.5" fill="#7c8794" text-anchor="start" dominant-baseline="central" font-weight="normal" >C 5</text>
<rect x="203" y="624" width="856" height="48" fill="url(#wk)"/><rect x="205.63" y="694" width="1" height="39" fill="#85878a"/><rect x="227.30" y="624" width="1" height="109" fill="#85878a"/><rect x="250.05" y="694" width="1" height="39" fill="#85878a"/><rect x="272.80" y="694" width="1" height="39" fill="#85878a"/><rect x="295.55" y="694" width="1" height="39" fill="#85878a"/><rect x="204" y="624" width="11" height="71" fill="url(#bk)"/><rect x="241" y="624" width="13" height="71" fill="url(#bk)"/><rect x="267" y="624" width="13" height="71" fill="url(#bk)"/><rect x="293" y="624" width="13" height="71" fill="url(#bk)"/><rect x="318.30" y="624" width="1" height="109" fill="#85878a"/><rect x="339.97" y="694" width="1" height="39" fill="#85878a"/><rect x="361.63" y="694" width="1" height="39" fill="#85878a"/><rect x="383.30" y="624" width="1" height="109" fill="#85878a"/><rect x="406.05" y="694" width="1" height="39" fill="#85878a"/><rect x="428.80" y="694" width="1" height="39" fill="#85878a"/><rect x="451.55" y="694" width="1" height="39" fill="#85878a"/><rect x="332" y="624" width="13" height="71" fill="url(#bk)"/><rect x="358" y="624" width="13" height="71" fill="url(#bk)"/><rect x="397" y="624" width="13" height="71" fill="url(#bk)"/><rect x="423" y="624" width="13" height="71" fill="url(#bk)"/><rect x="449" y="624" width="13" height="71" fill="url(#bk)"/><rect x="474.30" y="624" width="1" height="109" fill="#85878a"/><rect x="495.97" y="694" width="1" height="39" fill="#85878a"/><rect x="517.63" y="694" width="1" height="39" fill="#85878a"/><rect x="539.30" y="624" width="1" height="109" fill="#85878a"/><rect x="562.05" y="694" width="1" height="39" fill="#85878a"/><rect x="584.80" y="694" width="1" height="39" fill="#85878a"/><rect x="607.55" y="694" width="1" height="39" fill="#85878a"/><rect x="488" y="624" width="13" height="71" fill="url(#bk)"/><rect x="514" y="624" width="13" height="71" fill="url(#bk)"/><rect x="553" y="624" width="13" height="71" fill="url(#bk)"/><rect x="579" y="624" width="13" height="71" fill="url(#bk)"/><rect x="605" y="624" width="13" height="71" fill="url(#bk)"/><rect x="630.30" y="624" width="1" height="109" fill="#85878a"/><rect x="651.97" y="694" width="1" height="39" fill="#85878a"/><rect x="673.63" y="694" width="1" height="39" fill="#85878a"/><rect x="695.30" y="624" width="1" height="109" fill="#85878a"/><rect x="718.05" y="694" width="1" height="39" fill="#85878a"/><rect x="740.80" y="694" width="1" height="39" fill="#85878a"/><rect x="763.55" y="694" width="1" height="39" fill="#85878a"/><rect x="644" y="624" width="13" height="71" fill="url(#bk)"/><rect x="670" y="624" width="13" height="71" fill="url(#bk)"/><rect x="709" y="624" width="13" height="71" fill="url(#bk)"/><rect x="735" y="624" width="13" height="71" fill="url(#bk)"/><rect x="761" y="624" width="13" height="71" fill="url(#bk)"/><rect x="786.30" y="624" width="1" height="109" fill="#85878a"/><rect x="807.97" y="694" width="1" height="39" fill="#85878a"/><rect x="829.63" y="694" width="1" height="39" fill="#85878a"/><rect x="851.30" y="624" width="1" height="109" fill="#85878a"/><rect x="874.05" y="694" width="1" height="39" fill="#85878a"/><rect x="896.80" y="694" width="1" height="39" fill="#85878a"/><rect x="919.55" y="694" width="1" height="39" fill="#85878a"/><rect x="800" y="624" width="13" height="71" fill="url(#bk)"/><rect x="826" y="624" width="13" height="71" fill="url(#bk)"/><rect x="865" y="624" width="13" height="71" fill="url(#bk)"/><rect x="891" y="624" width="13" height="71" fill="url(#bk)"/><rect x="917" y="624" width="13" height="71" fill="url(#bk)"/><rect x="942.30" y="624" width="1" height="109" fill="#85878a"/><rect x="963.97" y="694" width="1" height="39" fill="#85878a"/><rect x="985.63" y="694" width="1" height="39" fill="#85878a"/><rect x="1007.30" y="624" width="1" height="109" fill="#85878a"/><rect x="1030.05" y="694" width="1" height="39" fill="#85878a"/><rect x="1052.80" y="694" width="1" height="39" fill="#85878a"/><rect x="956" y="624" width="13" height="71" fill="url(#bk)"/><rect x="982" y="624" width="13" height="71" fill="url(#bk)"/><rect x="1021" y="624" width="13" height="71" fill="url(#bk)"/><rect x="1047" y="624" width="11" height="71" fill="url(#bk)"/>
<rect x="202" y="622" width="1.5" height="112" fill="#141516"/>
<text x="87.5" y="663.5" font-size="11" fill="#d4d4d4" text-anchor="middle" dominant-baseline="central" font-weight="normal" >2</text>
<text x="87.5" y="677.3" font-size="11" fill="#d4d4d4" text-anchor="middle" dominant-baseline="central" font-weight="normal" >Bend</text>
<text x="87.5" y="691.2" font-size="11" fill="#d4d4d4" text-anchor="middle" dominant-baseline="central" font-weight="normal" >2</text>
<rect x="130.700" y="640.500" width="17.200" height="67.500" rx="2.500" fill="#131415"/><rect x="131.700" y="641.500" width="15.200" height="65.500" rx="2" fill="url(#wheelB)"/><rect x="131.700" y="669.400" width="15.200" height="2" fill="#2c2c2c"/><rect x="131.700" y="671.400" width="15.200" height="6" fill="#747474"/><rect x="131.700" y="678.200" width="15.200" height="1.800" fill="#a0a0a0"/>
<rect x="164.800" y="640.500" width="16.700" height="67.500" rx="2.500" fill="#131415"/><rect x="165.800" y="641.500" width="14.700" height="65.500" rx="2" fill="url(#wheelM)"/><rect x="165.800" y="694.800" width="14.700" height="2" fill="#262626"/><rect x="165.800" y="697.500" width="14.700" height="4" fill="#8a8a8a"/>
<rect x="131.7" y="643.5" width="15.2" height="0.6" fill="#000" opacity="0.10"/><rect x="131.7" y="645.5" width="15.2" height="0.6" fill="#000" opacity="0.10"/><rect x="131.7" y="647.5" width="15.2" height="0.6" fill="#000" opacity="0.10"/><rect x="131.7" y="649.5" width="15.2" height="0.6" fill="#000" opacity="0.10"/><rect x="131.7" y="651.5" width="15.2" height="0.6" fill="#000" opacity="0.10"/><rect x="131.7" y="653.5" width="15.2" height="0.6" fill="#000" opacity="0.10"/><rect x="131.7" y="655.5" width="15.2" height="0.6" fill="#000" opacity="0.10"/><rect x="131.7" y="657.5" width="15.2" height="0.6" fill="#000" opacity="0.10"/><rect x="131.7" y="659.5" width="15.2" height="0.6" fill="#000" opacity="0.10"/><rect x="131.7" y="661.5" width="15.2" height="0.6" fill="#000" opacity="0.10"/><rect x="131.7" y="663.5" width="15.2" height="0.6" fill="#000" opacity="0.10"/><rect x="131.7" y="665.5" width="15.2" height="0.6" fill="#000" opacity="0.10"/><rect x="131.7" y="667.5" width="15.2" height="0.6" fill="#000" opacity="0.10"/><rect x="131.7" y="669.5" width="15.2" height="0.6" fill="#000" opacity="0.10"/><rect x="131.7" y="671.5" width="15.2" height="0.6" fill="#000" opacity="0.10"/><rect x="131.7" y="673.5" width="15.2" height="0.6" fill="#000" opacity="0.10"/><rect x="131.7" y="675.5" width="15.2" height="0.6" fill="#000" opacity="0.10"/><rect x="131.7" y="677.5" width="15.2" height="0.6" fill="#000" opacity="0.10"/><rect x="131.7" y="679.5" width="15.2" height="0.6" fill="#000" opacity="0.10"/><rect x="131.7" y="681.5" width="15.2" height="0.6" fill="#000" opacity="0.10"/><rect x="131.7" y="683.5" width="15.2" height="0.6" fill="#000" opacity="0.10"/><rect x="131.7" y="685.5" width="15.2" height="0.6" fill="#000" opacity="0.10"/><rect x="131.7" y="687.5" width="15.2" height="0.6" fill="#000" opacity="0.10"/><rect x="131.7" y="689.5" width="15.2" height="0.6" fill="#000" opacity="0.10"/><rect x="131.7" y="691.5" width="15.2" height="0.6" fill="#000" opacity="0.10"/><rect x="131.7" y="693.5" width="15.2" height="0.6" fill="#000" opacity="0.10"/><rect x="131.7" y="695.5" width="15.2" height="0.6" fill="#000" opacity="0.10"/><rect x="131.7" y="697.5" width="15.2" height="0.6" fill="#000" opacity="0.10"/><rect x="131.7" y="699.5" width="15.2" height="0.6" fill="#000" opacity="0.10"/><rect x="131.7" y="701.5" width="15.2" height="0.6" fill="#000" opacity="0.10"/><rect x="131.7" y="703.5" width="15.2" height="0.6" fill="#000" opacity="0.10"/><rect x="131.7" y="705.5" width="15.2" height="0.6" fill="#000" opacity="0.10"/><rect x="165.8" y="643.5" width="14.7" height="0.6" fill="#000" opacity="0.10"/><rect x="165.8" y="645.5" width="14.7" height="0.6" fill="#000" opacity="0.10"/><rect x="165.8" y="647.5" width="14.7" height="0.6" fill="#000" opacity="0.10"/><rect x="165.8" y="649.5" width="14.7" height="0.6" fill="#000" opacity="0.10"/><rect x="165.8" y="651.5" width="14.7" height="0.6" fill="#000" opacity="0.10"/><rect x="165.8" y="653.5" width="14.7" height="0.6" fill="#000" opacity="0.10"/><rect x="165.8" y="655.5" width="14.7" height="0.6" fill="#000" opacity="0.10"/><rect x="165.8" y="657.5" width="14.7" height="0.6" fill="#000" opacity="0.10"/><rect x="165.8" y="659.5" width="14.7" height="0.6" fill="#000" opacity="0.10"/><rect x="165.8" y="661.5" width="14.7" height="0.6" fill="#000" opacity="0.10"/><rect x="165.8" y="663.5" width="14.7" height="0.6" fill="#000" opacity="0.10"/><rect x="165.8" y="665.5" width="14.7" height="0.6" fill="#000" opacity="0.10"/><rect x="165.8" y="667.5" width="14.7" height="0.6" fill="#000" opacity="0.10"/><rect x="165.8" y="669.5" width="14.7" height="0.6" fill="#000" opacity="0.10"/><rect x="165.8" y="671.5" width="14.7" height="0.6" fill="#000" opacity="0.10"/><rect x="165.8" y="673.5" width="14.7" height="0.6" fill="#000" opacity="0.10"/><rect x="165.8" y="675.5" width="14.7" height="0.6" fill="#000" opacity="0.10"/><rect x="165.8" y="677.5" width="14.7" height="0.6" fill="#000" opacity="0.10"/><rect x="165.8" y="679.5" width="14.7" height="0.6" fill="#000" opacity="0.10"/><rect x="165.8" y="681.5" width="14.7" height="0.6" fill="#000" opacity="0.10"/><rect x="165.8" y="683.5" width="14.7" height="0.6" fill="#000" opacity="0.10"/><rect x="165.8" y="685.5" width="14.7" height="0.6" fill="#000" opacity="0.10"/><rect x="165.8" y="687.5" width="14.7" height="0.6" fill="#000" opacity="0.10"/><rect x="165.8" y="689.5" width="14.7" height="0.6" fill="#000" opacity="0.10"/><rect x="165.8" y="691.5" width="14.7" height="0.6" fill="#000" opacity="0.10"/><rect x="165.8" y="693.5" width="14.7" height="0.6" fill="#000" opacity="0.10"/><rect x="165.8" y="695.5" width="14.7" height="0.6" fill="#000" opacity="0.10"/><rect x="165.8" y="697.5" width="14.7" height="0.6" fill="#000" opacity="0.10"/><rect x="165.8" y="699.5" width="14.7" height="0.6" fill="#000" opacity="0.10"/><rect x="165.8" y="701.5" width="14.7" height="0.6" fill="#000" opacity="0.10"/><rect x="165.8" y="703.5" width="14.7" height="0.6" fill="#000" opacity="0.10"/><rect x="165.8" y="705.5" width="14.7" height="0.6" fill="#000" opacity="0.10"/>
<text x="139.1" y="719" font-size="11" fill="#d4d4d4" text-anchor="middle" dominant-baseline="central" font-weight="normal" >Bend</text>
<text x="174.3" y="719" font-size="11" fill="#d4d4d4" text-anchor="middle" dominant-baseline="central" font-weight="normal" >Mod</text>
<path d="M58.800,735.200h8.400l-4.200,4.600z" fill="#8a8e94"/><rect x="80" y="737" width="8" height="3" fill="#7d8288"/><path d="M108,735.500v4.500h-6z" fill="#8a8e94"/><rect x="120" y="735" width="16" height="3.500" fill="#7d8288"/>
<g fill="#9a9ea4"><path d="M757,735l4,-1v6h-4z"/><path d="M766,740l4,-5l4,5z"/><rect x="778" y="735" width="30" height="1.500"/><rect x="812" y="736" width="24" height="1.500"/><path d="M858,740l4,-5l4,5z"/><rect x="872" y="737" width="10" height="1.500"/></g><rect x="896" y="734" width="2.500" height="6" fill="#3a8ad0"/>
<rect x="49" y="0" width="32" height="1.8" fill="#2e86cf" opacity="0.85"/><rect x="60" y="0" width="11" height="2" fill="#f0f0f0" opacity="0.85"/><rect x="90" y="0" width="2" height="1.5" fill="#e0e0e0" opacity="0.85"/><rect x="96" y="0" width="10" height="2" fill="#e8e8e8" opacity="0.85"/><rect x="127" y="0" width="6" height="2" fill="#e8e8e8" opacity="0.85"/><rect x="155" y="0" width="15" height="2" fill="#e8e8e8" opacity="0.85"/><rect x="192" y="0" width="8" height="2" fill="#e0e0e0" opacity="0.85"/><rect x="217" y="0" width="8" height="2" fill="#e0e0e0" opacity="0.85"/><rect x="245" y="0" width="14" height="1.5" fill="#d8d8d8" opacity="0.85"/><rect x="280" y="0" width="16" height="1.5" fill="#e0e0e0" opacity="0.85"/><rect x="335" y="0" width="10" height="1.5" fill="#d8d8d8" opacity="0.85"/><rect x="365" y="0" width="14" height="1.5" fill="#e0e0e0" opacity="0.85"/><rect x="395" y="0" width="10" height="1.5" fill="#d8d8d8" opacity="0.85"/><rect x="430" y="0" width="12" height="1.5" fill="#d8d8d8" opacity="0.85"/><rect x="462" y="0" width="16" height="1.5" fill="#e8e8e8" opacity="0.85"/><rect x="510" y="0" width="10" height="1.5" fill="#d8d8d8" opacity="0.85"/><rect x="785" y="0" width="30" height="1.8" fill="#2e86cf" opacity="0.85"/><rect x="792" y="0" width="5" height="2" fill="#f0f0f0" opacity="0.85"/><rect x="804" y="0" width="4" height="2" fill="#f0f0f0" opacity="0.85"/><rect x="820" y="0" width="12" height="1.5" fill="#d8d8d8" opacity="0.85"/><rect x="857" y="0" width="13" height="2" fill="#f0f0f0" opacity="0.85"/><rect x="883" y="0" width="8" height="1.5" fill="#d8d8d8" opacity="0.85"/><rect x="931" y="0" width="6" height="1.5" fill="#d8d8d8" opacity="0.85"/><rect x="953" y="0" width="8" height="2" fill="#e0e0e0" opacity="0.85"/><rect x="986" y="0" width="14" height="2" fill="#f0f0f0" opacity="0.85"/>
</svg>
</body></html>
